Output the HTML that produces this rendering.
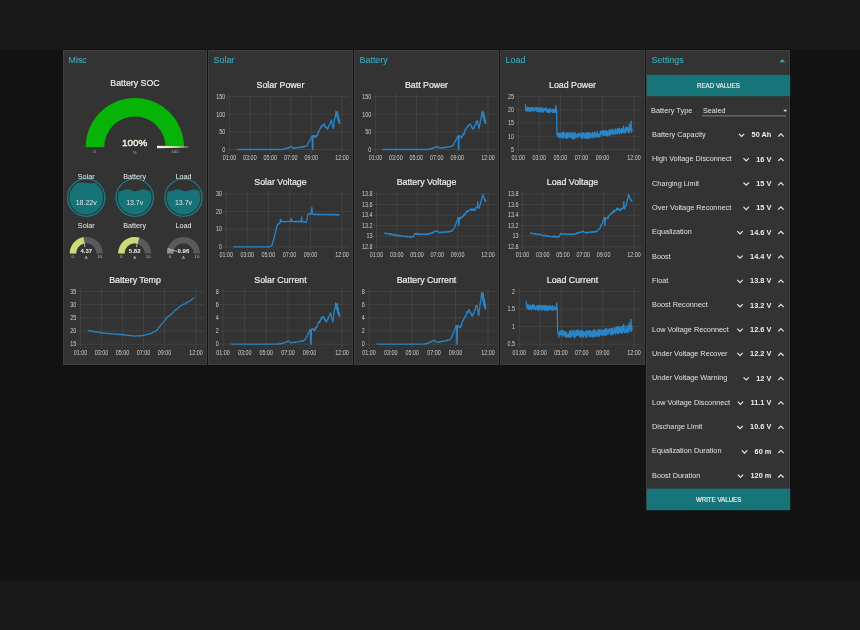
<!DOCTYPE html>
<html><head><meta charset="utf-8"><style>
html,body{margin:0;padding:0;background:#121212;width:860px;height:630px;overflow:hidden}
svg{display:block;font-family:"Liberation Sans", sans-serif;will-change:transform}

</style></head><body><div id="wrap">
<svg width="860" height="630" viewBox="0 0 860 630">
<rect x="0" y="0" width="860" height="630" fill="#121212"/>
<rect x="0" y="0" width="860" height="49" fill="#191919"/>
<rect x="0" y="581" width="860" height="49" fill="#191919"/>
<rect x="63.5" y="50.5" width="143" height="314" fill="#333333" stroke="#3e3e3e" stroke-width="1"/>
<rect x="208.5" y="50.5" width="144" height="314" fill="#333333" stroke="#3e3e3e" stroke-width="1"/>
<rect x="354.5" y="50.5" width="144" height="314" fill="#333333" stroke="#3e3e3e" stroke-width="1"/>
<rect x="500.5" y="50.5" width="144" height="314" fill="#333333" stroke="#3e3e3e" stroke-width="1"/>
<rect x="646.5" y="50.5" width="143" height="459" fill="#333333" stroke="#3e3e3e" stroke-width="1"/>
<text transform="translate(68.50,63.30) scale(0.92,1)" x="0" y="0" font-size="9.7" fill="#38abbb" text-anchor="start" font-weight="normal" stroke="#38abbb" stroke-width="0.12">Misc</text>
<text transform="translate(213.50,63.30) scale(0.92,1)" x="0" y="0" font-size="9.7" fill="#38abbb" text-anchor="start" font-weight="normal" stroke="#38abbb" stroke-width="0.12">Solar</text>
<text transform="translate(359.50,63.30) scale(0.92,1)" x="0" y="0" font-size="9.7" fill="#38abbb" text-anchor="start" font-weight="normal" stroke="#38abbb" stroke-width="0.12">Battery</text>
<text transform="translate(505.50,63.30) scale(0.92,1)" x="0" y="0" font-size="9.7" fill="#38abbb" text-anchor="start" font-weight="normal" stroke="#38abbb" stroke-width="0.12">Load</text>
<text transform="translate(651.50,63.30) scale(0.92,1)" x="0" y="0" font-size="9.7" fill="#38abbb" text-anchor="start" font-weight="normal" stroke="#38abbb" stroke-width="0.12">Settings</text>
<text x="280.50" y="88.00" font-size="8.8" fill="#ececec" text-anchor="middle" font-weight="normal" stroke="#ececec" stroke-width="0.2">Solar Power</text>
<line x1="225.90" y1="96.70" x2="350.00" y2="96.70" stroke="#474747" stroke-width="0.7"/>
<text transform="translate(225.20,98.90) scale(0.86,1)" x="0" y="0" font-size="6.3" fill="#cfcfcf" text-anchor="end" font-weight="normal" >150</text>
<line x1="225.90" y1="114.30" x2="350.00" y2="114.30" stroke="#474747" stroke-width="0.7"/>
<text transform="translate(225.20,116.50) scale(0.86,1)" x="0" y="0" font-size="6.3" fill="#cfcfcf" text-anchor="end" font-weight="normal" >100</text>
<line x1="225.90" y1="131.90" x2="350.00" y2="131.90" stroke="#474747" stroke-width="0.7"/>
<text transform="translate(225.20,134.10) scale(0.86,1)" x="0" y="0" font-size="6.3" fill="#cfcfcf" text-anchor="end" font-weight="normal" >50</text>
<line x1="225.90" y1="149.50" x2="350.00" y2="149.50" stroke="#474747" stroke-width="0.7"/>
<text transform="translate(225.20,151.70) scale(0.86,1)" x="0" y="0" font-size="6.3" fill="#cfcfcf" text-anchor="end" font-weight="normal" >0</text>
<line x1="229.40" y1="93.70" x2="229.40" y2="154.10" stroke="#474747" stroke-width="0.7"/>
<text transform="translate(229.40,160.10) scale(0.86,1)" x="0" y="0" font-size="6.3" fill="#cfcfcf" text-anchor="middle" font-weight="normal" >01:00</text>
<line x1="249.87" y1="93.70" x2="249.87" y2="154.10" stroke="#474747" stroke-width="0.7"/>
<text transform="translate(249.87,160.10) scale(0.86,1)" x="0" y="0" font-size="6.3" fill="#cfcfcf" text-anchor="middle" font-weight="normal" >03:00</text>
<line x1="270.35" y1="93.70" x2="270.35" y2="154.10" stroke="#474747" stroke-width="0.7"/>
<text transform="translate(270.35,160.10) scale(0.86,1)" x="0" y="0" font-size="6.3" fill="#cfcfcf" text-anchor="middle" font-weight="normal" >05:00</text>
<line x1="290.82" y1="93.70" x2="290.82" y2="154.10" stroke="#474747" stroke-width="0.7"/>
<text transform="translate(290.82,160.10) scale(0.86,1)" x="0" y="0" font-size="6.3" fill="#cfcfcf" text-anchor="middle" font-weight="normal" >07:00</text>
<line x1="311.29" y1="93.70" x2="311.29" y2="154.10" stroke="#474747" stroke-width="0.7"/>
<text transform="translate(311.29,160.10) scale(0.86,1)" x="0" y="0" font-size="6.3" fill="#cfcfcf" text-anchor="middle" font-weight="normal" >09:00</text>
<line x1="342.00" y1="93.70" x2="342.00" y2="154.10" stroke="#474747" stroke-width="0.7"/>
<text transform="translate(342.00,160.10) scale(0.86,1)" x="0" y="0" font-size="6.3" fill="#cfcfcf" text-anchor="middle" font-weight="normal" >12:00</text>
<polyline points="236.72,149.50 237.07,149.50 237.43,149.50 237.79,149.50 238.15,149.50 238.51,149.50 238.87,149.50 239.22,149.50 239.58,149.50 239.94,149.50 240.30,149.50 240.66,149.50 241.02,149.50 241.38,149.50 241.73,149.50 242.09,149.50 242.45,149.50 242.81,149.50 243.17,149.50 243.53,149.50 243.88,149.50 244.24,149.50 244.60,149.50 244.96,149.50 245.32,149.50 245.68,149.50 246.03,149.50 246.39,149.50 246.75,149.50 247.11,149.50 247.47,149.50 247.83,149.50 248.19,149.50 248.54,149.50 248.90,149.50 249.26,149.50 249.62,149.50 249.98,149.50 250.34,149.50 250.69,149.50 251.05,149.50 251.41,149.50 251.77,149.50 252.13,149.50 252.49,149.50 252.84,149.50 253.20,149.50 253.56,149.50 253.92,149.50 254.28,149.50 254.64,149.50 255.00,149.50 255.35,149.50 255.71,149.50 256.07,149.50 256.43,149.50 256.79,149.50 257.15,149.50 257.50,149.50 257.86,149.50 258.22,149.50 258.58,149.50 258.94,149.50 259.30,149.50 259.65,149.50 260.01,149.50 260.37,149.50 260.73,149.50 261.09,149.50 261.45,149.50 261.81,149.50 262.16,149.50 262.52,149.50 262.88,149.50 263.24,149.50 263.60,149.50 263.96,149.50 264.31,149.50 264.67,149.50 265.03,149.50 265.39,149.50 265.75,149.50 266.11,149.50 266.46,149.50 266.82,149.50 267.18,149.50 267.54,149.50 267.90,149.50 268.26,149.50 268.62,149.50 268.97,149.50 269.33,149.50 269.69,149.50 270.05,149.50 270.41,149.50 270.77,149.50 271.12,149.50 271.48,149.50 271.84,149.50 272.20,149.50 272.56,149.50 272.92,149.50 273.27,149.50 273.63,149.50 273.99,149.50 274.35,149.50 274.71,149.50 275.07,149.50 275.43,149.50 275.78,149.50 276.14,149.50 276.50,149.50 276.86,149.50 277.22,149.50 277.58,149.50 277.93,149.50 278.29,149.50 278.65,149.50 279.01,149.50 279.37,149.50 279.73,149.50 280.08,149.50 280.44,149.50 280.80,149.50 281.16,149.50 281.52,149.50 281.88,149.50 282.24,149.50 282.60,149.62 282.97,149.19 283.34,149.13 283.71,149.13 284.08,149.20 284.45,148.74 284.82,148.63 285.19,148.72 285.56,148.63 285.93,148.71 286.30,148.44 286.67,148.62 287.05,148.24 287.42,147.96 287.80,148.15 288.18,147.55 288.55,147.76 288.93,147.62 289.30,147.60 289.68,146.85 290.05,146.87 290.43,146.64 290.80,146.66 291.18,146.60 291.54,147.12 291.90,147.16 292.27,147.28 292.63,147.74 292.99,147.44 293.35,148.04 293.72,148.18 294.09,148.35 294.46,147.87 294.83,148.26 295.20,147.70 295.57,147.95 295.94,147.83 296.31,147.91 296.68,147.77 297.05,147.90 297.42,147.95 297.79,147.37 298.16,147.71 298.53,147.32 298.90,147.63 299.28,147.09 299.65,147.09 300.02,147.28 300.40,147.06 300.77,146.99 301.15,147.04 301.53,146.88 301.91,147.20 302.29,146.92 302.67,146.63 303.05,146.96 303.43,146.44 303.81,146.40 304.19,146.64 304.57,146.61 304.95,146.49 305.33,146.47 305.71,146.33 306.09,145.75 306.47,145.88 306.85,145.84 307.23,145.28 307.61,144.77 308.00,143.61 308.38,142.68 308.77,142.23 309.15,141.47 309.53,140.67 309.92,139.78 310.30,139.35 310.68,138.41 311.06,137.55 311.43,136.79 311.80,136.04 312.31,136.04 312.51,149.50 312.82,149.50 313.02,135.67 313.53,135.59 314.04,135.67 314.42,136.81 314.81,137.13 315.20,136.95 315.58,135.72 315.97,137.14 316.33,136.83 316.70,135.46 317.07,135.51 317.43,135.33 317.80,134.72 318.16,132.03 318.53,131.41 318.89,131.75 319.26,130.22 319.63,129.53 319.99,129.28 320.36,127.75 320.74,127.11 321.11,128.08 321.48,126.07 321.85,125.66 322.23,126.16 322.60,124.91 322.97,125.46 323.34,125.29 323.71,125.14 324.09,124.00 324.44,123.76 324.80,126.39 325.16,127.39 325.52,127.01 325.89,126.58 326.26,127.04 326.62,128.19 326.99,127.64 327.36,128.91 327.73,129.25 328.10,127.86 328.47,126.93 328.84,125.74 329.20,124.68 329.58,124.89 329.96,124.50 330.33,123.13 330.71,120.99 331.08,120.11 331.46,120.72 331.87,122.05 332.28,124.68 332.79,126.64 333.30,128.49 333.71,126.15 334.12,121.29 334.53,119.51 334.94,118.07 335.35,116.76 335.70,113.39 336.06,111.22 336.47,114.65 336.78,113.07 337.19,117.82 337.60,112.01 338.01,120.99 338.52,116.02 339.03,123.10 339.44,119.93 339.85,124.00" fill="none" stroke="#2a84c6" stroke-width="1.3" stroke-linejoin="round"/>
<text x="280.50" y="185.40" font-size="8.8" fill="#ececec" text-anchor="middle" font-weight="normal" stroke="#ececec" stroke-width="0.2">Solar Voltage</text>
<line x1="222.80" y1="194.00" x2="350.00" y2="194.00" stroke="#474747" stroke-width="0.7"/>
<text transform="translate(222.10,196.20) scale(0.86,1)" x="0" y="0" font-size="6.3" fill="#cfcfcf" text-anchor="end" font-weight="normal" >30</text>
<line x1="222.80" y1="211.60" x2="350.00" y2="211.60" stroke="#474747" stroke-width="0.7"/>
<text transform="translate(222.10,213.80) scale(0.86,1)" x="0" y="0" font-size="6.3" fill="#cfcfcf" text-anchor="end" font-weight="normal" >20</text>
<line x1="222.80" y1="229.20" x2="350.00" y2="229.20" stroke="#474747" stroke-width="0.7"/>
<text transform="translate(222.10,231.40) scale(0.86,1)" x="0" y="0" font-size="6.3" fill="#cfcfcf" text-anchor="end" font-weight="normal" >10</text>
<line x1="222.80" y1="246.80" x2="350.00" y2="246.80" stroke="#474747" stroke-width="0.7"/>
<text transform="translate(222.10,249.00) scale(0.86,1)" x="0" y="0" font-size="6.3" fill="#cfcfcf" text-anchor="end" font-weight="normal" >0</text>
<line x1="226.30" y1="191.00" x2="226.30" y2="251.40" stroke="#474747" stroke-width="0.7"/>
<text transform="translate(226.30,257.40) scale(0.86,1)" x="0" y="0" font-size="6.3" fill="#cfcfcf" text-anchor="middle" font-weight="normal" >01:00</text>
<line x1="247.34" y1="191.00" x2="247.34" y2="251.40" stroke="#474747" stroke-width="0.7"/>
<text transform="translate(247.34,257.40) scale(0.86,1)" x="0" y="0" font-size="6.3" fill="#cfcfcf" text-anchor="middle" font-weight="normal" >03:00</text>
<line x1="268.37" y1="191.00" x2="268.37" y2="251.40" stroke="#474747" stroke-width="0.7"/>
<text transform="translate(268.37,257.40) scale(0.86,1)" x="0" y="0" font-size="6.3" fill="#cfcfcf" text-anchor="middle" font-weight="normal" >05:00</text>
<line x1="289.41" y1="191.00" x2="289.41" y2="251.40" stroke="#474747" stroke-width="0.7"/>
<text transform="translate(289.41,257.40) scale(0.86,1)" x="0" y="0" font-size="6.3" fill="#cfcfcf" text-anchor="middle" font-weight="normal" >07:00</text>
<line x1="310.45" y1="191.00" x2="310.45" y2="251.40" stroke="#474747" stroke-width="0.7"/>
<text transform="translate(310.45,257.40) scale(0.86,1)" x="0" y="0" font-size="6.3" fill="#cfcfcf" text-anchor="middle" font-weight="normal" >09:00</text>
<line x1="342.00" y1="191.00" x2="342.00" y2="251.40" stroke="#474747" stroke-width="0.7"/>
<text transform="translate(342.00,257.40) scale(0.86,1)" x="0" y="0" font-size="6.3" fill="#cfcfcf" text-anchor="middle" font-weight="normal" >12:00</text>
<polyline points="233.68,246.80 234.10,246.80 234.53,246.80 234.95,246.80 235.37,246.80 235.79,246.80 236.21,246.80 236.64,246.80 237.06,246.80 237.48,246.80 237.90,246.80 238.32,246.80 238.75,246.80 239.17,246.80 239.59,246.80 240.01,246.80 240.43,246.80 240.86,246.80 241.28,246.80 241.70,246.80 242.12,246.80 242.54,246.80 242.97,246.80 243.39,246.80 243.81,246.80 244.23,246.80 244.65,246.80 245.08,246.80 245.50,246.80 245.92,246.80 246.34,246.80 246.76,246.80 247.19,246.80 247.61,246.80 248.03,246.80 248.45,246.80 248.87,246.80 249.30,246.80 249.72,246.80 250.14,246.80 250.56,246.80 250.98,246.80 251.41,246.80 251.83,246.80 252.25,246.80 252.67,246.80 253.09,246.80 253.52,246.80 253.94,246.80 254.36,246.80 254.78,246.80 255.20,246.80 255.63,246.80 256.05,246.80 256.47,246.80 256.89,246.80 257.31,246.80 257.74,246.80 258.16,246.80 258.58,246.80 259.00,246.80 259.42,246.80 259.85,246.80 260.27,246.80 260.69,246.80 261.11,246.80 261.53,246.80 261.96,246.80 262.38,246.80 262.80,246.80 263.22,246.80 263.64,246.80 264.07,246.80 264.49,246.80 264.91,246.80 265.33,246.80 265.75,246.80 266.17,246.80 266.60,246.80 267.02,246.80 267.44,246.80 267.86,246.80 268.28,246.80 268.71,246.80 269.13,246.80 269.55,246.80 269.97,246.80 270.41,246.46 270.85,245.99 271.28,245.30 271.72,245.31 272.16,244.90 272.64,243.12 273.13,241.29 273.61,239.86 274.10,237.81 274.58,235.95 275.07,234.29 275.50,232.15 275.94,230.85 276.38,228.78 276.81,227.07 277.25,224.84 277.71,224.29 278.17,224.10 278.62,224.37 279.08,223.29 279.54,223.41 280.16,222.51 280.48,219.08 280.99,221.98 281.51,221.56 281.96,221.16 282.40,221.42 282.84,221.45 283.28,221.83 283.72,221.95 284.16,221.51 284.60,221.90 285.04,221.78 285.48,221.73 285.92,221.91 286.36,221.54 286.80,221.55 287.24,221.21 287.68,221.48 288.13,221.37 288.57,221.48 289.01,221.34 289.45,221.51 289.89,221.65 290.33,221.04 290.77,221.46 291.29,218.29 291.81,221.46 292.23,221.05 292.66,221.19 293.09,221.32 293.51,221.66 293.94,221.74 294.36,221.71 294.79,221.90 295.21,221.33 295.64,221.65 296.06,221.28 296.49,221.68 296.91,221.21 297.34,221.32 297.76,222.05 298.19,221.88 298.62,221.30 299.04,221.69 299.47,221.27 299.89,221.77 300.32,222.06 300.74,221.60 301.17,221.72 301.58,216.86 302.00,221.72 302.44,221.53 302.87,222.00 303.31,222.20 303.75,222.03 304.18,221.54 304.62,221.76 305.06,222.34 305.49,222.27 305.93,222.44 306.37,222.14 306.85,219.82 307.34,216.51 307.82,214.06 308.29,214.27 308.76,213.88 309.23,213.91 309.69,214.06 310.16,213.54 310.63,213.98 311.10,213.48 311.57,213.54 311.88,207.52 312.40,213.54 313.02,214.38 313.45,214.71 313.88,214.46 314.31,214.65 314.74,214.61 315.18,214.02 315.61,214.17 316.04,214.60 316.47,214.12 316.90,214.69 317.33,214.55 317.76,214.16 318.19,214.35 318.62,214.82 319.05,214.07 319.48,214.74 319.91,214.71 320.34,214.28 320.78,214.66 321.21,214.70 321.64,214.89 322.07,214.89 322.50,214.48 322.93,214.77 323.36,214.48 323.79,214.68 324.22,214.62 324.65,214.20 325.08,214.59 325.51,214.61 325.95,214.54 326.38,214.30 326.81,214.88 327.24,214.92 327.67,214.28 328.10,214.37 328.53,214.85 328.96,214.91 329.40,214.45 329.83,214.29 330.26,214.92 330.69,214.29 331.12,214.36 331.55,214.60 331.98,214.76 332.41,215.03 332.85,215.09 333.28,214.32 333.71,214.94 334.14,214.55 334.57,214.93 335.00,214.46 335.43,214.66 335.86,214.92 336.30,215.03 336.73,214.57 337.16,215.13 337.59,215.00 338.02,214.73 338.45,214.49 338.88,214.69 339.31,214.98 339.75,214.80" fill="none" stroke="#2a84c6" stroke-width="1.3" stroke-linejoin="round"/>
<text x="280.50" y="283.00" font-size="8.8" fill="#ececec" text-anchor="middle" font-weight="normal" stroke="#ececec" stroke-width="0.2">Solar Current</text>
<line x1="219.50" y1="291.40" x2="350.00" y2="291.40" stroke="#474747" stroke-width="0.7"/>
<text transform="translate(218.80,293.60) scale(0.86,1)" x="0" y="0" font-size="6.3" fill="#cfcfcf" text-anchor="end" font-weight="normal" >8</text>
<line x1="219.50" y1="304.60" x2="350.00" y2="304.60" stroke="#474747" stroke-width="0.7"/>
<text transform="translate(218.80,306.80) scale(0.86,1)" x="0" y="0" font-size="6.3" fill="#cfcfcf" text-anchor="end" font-weight="normal" >6</text>
<line x1="219.50" y1="317.80" x2="350.00" y2="317.80" stroke="#474747" stroke-width="0.7"/>
<text transform="translate(218.80,320.00) scale(0.86,1)" x="0" y="0" font-size="6.3" fill="#cfcfcf" text-anchor="end" font-weight="normal" >4</text>
<line x1="219.50" y1="331.00" x2="350.00" y2="331.00" stroke="#474747" stroke-width="0.7"/>
<text transform="translate(218.80,333.20) scale(0.86,1)" x="0" y="0" font-size="6.3" fill="#cfcfcf" text-anchor="end" font-weight="normal" >2</text>
<line x1="219.50" y1="344.20" x2="350.00" y2="344.20" stroke="#474747" stroke-width="0.7"/>
<text transform="translate(218.80,346.40) scale(0.86,1)" x="0" y="0" font-size="6.3" fill="#cfcfcf" text-anchor="end" font-weight="normal" >0</text>
<line x1="223.00" y1="288.40" x2="223.00" y2="348.80" stroke="#474747" stroke-width="0.7"/>
<text transform="translate(223.00,354.80) scale(0.86,1)" x="0" y="0" font-size="6.3" fill="#cfcfcf" text-anchor="middle" font-weight="normal" >01:00</text>
<line x1="244.64" y1="288.40" x2="244.64" y2="348.80" stroke="#474747" stroke-width="0.7"/>
<text transform="translate(244.64,354.80) scale(0.86,1)" x="0" y="0" font-size="6.3" fill="#cfcfcf" text-anchor="middle" font-weight="normal" >03:00</text>
<line x1="266.27" y1="288.40" x2="266.27" y2="348.80" stroke="#474747" stroke-width="0.7"/>
<text transform="translate(266.27,354.80) scale(0.86,1)" x="0" y="0" font-size="6.3" fill="#cfcfcf" text-anchor="middle" font-weight="normal" >05:00</text>
<line x1="287.91" y1="288.40" x2="287.91" y2="348.80" stroke="#474747" stroke-width="0.7"/>
<text transform="translate(287.91,354.80) scale(0.86,1)" x="0" y="0" font-size="6.3" fill="#cfcfcf" text-anchor="middle" font-weight="normal" >07:00</text>
<line x1="309.55" y1="288.40" x2="309.55" y2="348.80" stroke="#474747" stroke-width="0.7"/>
<text transform="translate(309.55,354.80) scale(0.86,1)" x="0" y="0" font-size="6.3" fill="#cfcfcf" text-anchor="middle" font-weight="normal" >09:00</text>
<line x1="342.00" y1="288.40" x2="342.00" y2="348.80" stroke="#474747" stroke-width="0.7"/>
<text transform="translate(342.00,354.80) scale(0.86,1)" x="0" y="0" font-size="6.3" fill="#cfcfcf" text-anchor="middle" font-weight="normal" >12:00</text>
<polyline points="230.73,344.20 231.11,344.20 231.49,344.20 231.87,344.20 232.25,344.20 232.63,344.20 233.00,344.20 233.38,344.20 233.76,344.20 234.14,344.20 234.52,344.20 234.90,344.20 235.28,344.20 235.66,344.20 236.03,344.20 236.41,344.20 236.79,344.20 237.17,344.20 237.55,344.20 237.93,344.20 238.31,344.20 238.69,344.20 239.06,344.20 239.44,344.20 239.82,344.20 240.20,344.20 240.58,344.20 240.96,344.20 241.34,344.20 241.72,344.20 242.10,344.20 242.47,344.20 242.85,344.20 243.23,344.20 243.61,344.20 243.99,344.20 244.37,344.20 244.75,344.20 245.13,344.20 245.50,344.20 245.88,344.20 246.26,344.20 246.64,344.20 247.02,344.20 247.40,344.20 247.78,344.20 248.16,344.20 248.53,344.20 248.91,344.20 249.29,344.20 249.67,344.20 250.05,344.20 250.43,344.20 250.81,344.20 251.19,344.20 251.57,344.20 251.94,344.20 252.32,344.20 252.70,344.20 253.08,344.20 253.46,344.20 253.84,344.20 254.22,344.20 254.60,344.20 254.97,344.20 255.35,344.20 255.73,344.20 256.11,344.20 256.49,344.20 256.87,344.20 257.25,344.20 257.63,344.20 258.00,344.20 258.38,344.20 258.76,344.20 259.14,344.20 259.52,344.20 259.90,344.20 260.28,344.20 260.66,344.20 261.03,344.20 261.41,344.20 261.79,344.20 262.17,344.20 262.55,344.20 262.93,344.20 263.31,344.20 263.69,344.20 264.07,344.20 264.44,344.20 264.82,344.20 265.20,344.20 265.58,344.20 265.96,344.20 266.34,344.20 266.72,344.20 267.10,344.20 267.47,344.20 267.85,344.20 268.23,344.20 268.61,344.20 268.99,344.20 269.37,344.20 269.75,344.20 270.13,344.20 270.50,344.20 270.88,344.20 271.26,344.20 271.64,344.20 272.02,344.20 272.40,344.20 272.78,344.20 273.16,344.20 273.54,344.20 273.91,344.20 274.29,344.20 274.67,344.20 275.05,344.20 275.43,344.20 275.81,344.20 276.19,344.20 276.57,344.20 276.94,344.20 277.32,344.20 277.70,344.20 278.08,344.20 278.46,344.20 278.84,344.20 279.23,343.83 279.62,343.71 280.01,343.64 280.40,344.05 280.79,343.62 281.18,343.63 281.57,343.46 281.96,343.60 282.35,343.46 282.74,343.20 283.13,343.06 283.53,343.08 283.93,342.78 284.32,342.90 284.72,342.71 285.12,342.16 285.51,342.19 285.91,341.98 286.31,341.68 286.70,341.77 287.10,341.80 287.49,341.19 287.89,341.16 288.29,341.06 288.67,341.21 289.05,341.48 289.44,341.50 289.82,342.13 290.21,342.12 290.59,342.61 290.97,342.77 291.36,342.67 291.76,342.56 292.15,342.72 292.54,342.81 292.93,342.51 293.32,342.29 293.71,342.32 294.11,342.35 294.50,342.17 294.89,342.41 295.28,342.35 295.67,342.20 296.06,341.83 296.46,342.17 296.85,342.16 297.24,342.12 297.63,341.80 298.03,342.03 298.43,341.81 298.83,341.55 299.23,341.33 299.63,341.57 300.04,341.48 300.44,341.46 300.84,341.38 301.24,341.01 301.64,341.09 302.04,341.21 302.44,341.23 302.84,340.74 303.24,340.72 303.64,340.78 304.05,340.29 304.45,340.37 304.85,339.89 305.25,339.64 305.66,338.55 306.07,337.93 306.47,336.88 306.88,336.55 307.28,335.22 307.69,334.98 308.09,333.93 308.50,333.35 308.91,332.22 309.30,331.17 309.69,330.40 310.09,329.66 310.62,329.66 310.84,344.20 311.16,344.20 311.37,329.26 311.91,328.96 312.45,329.26 312.86,328.77 313.26,328.71 313.67,330.12 314.08,329.25 314.49,330.86 314.88,329.43 315.26,329.72 315.65,327.29 316.04,328.09 316.42,327.80 316.81,327.34 317.19,325.54 317.58,325.48 317.97,322.76 318.35,321.94 318.74,322.36 319.13,322.59 319.53,322.37 319.92,320.73 320.31,321.16 320.71,319.65 321.10,318.42 321.49,319.38 321.89,318.42 322.28,316.64 322.67,317.32 323.07,316.66 323.45,317.89 323.83,317.25 324.20,318.27 324.58,319.91 324.97,319.28 325.36,320.23 325.75,321.37 326.14,321.04 326.53,321.96 326.92,320.18 327.31,319.77 327.70,319.91 328.09,318.85 328.48,317.40 328.87,316.92 329.27,315.26 329.67,315.11 330.06,314.42 330.46,312.97 330.86,313.12 331.29,316.29 331.72,317.40 332.26,319.11 332.80,321.50 333.24,318.72 333.67,314.89 334.10,311.81 334.54,309.44 334.97,308.85 335.35,306.52 335.73,302.86 336.16,306.56 336.48,304.85 336.92,309.99 337.35,303.71 337.78,313.41 338.32,308.05 338.86,315.69 339.30,312.27 339.73,316.66" fill="none" stroke="#2a84c6" stroke-width="1.3" stroke-linejoin="round"/>
<text x="426.50" y="88.00" font-size="8.8" fill="#ececec" text-anchor="middle" font-weight="normal" stroke="#ececec" stroke-width="0.2">Batt Power</text>
<line x1="371.90" y1="96.70" x2="496.00" y2="96.70" stroke="#474747" stroke-width="0.7"/>
<text transform="translate(371.20,98.90) scale(0.86,1)" x="0" y="0" font-size="6.3" fill="#cfcfcf" text-anchor="end" font-weight="normal" >150</text>
<line x1="371.90" y1="114.30" x2="496.00" y2="114.30" stroke="#474747" stroke-width="0.7"/>
<text transform="translate(371.20,116.50) scale(0.86,1)" x="0" y="0" font-size="6.3" fill="#cfcfcf" text-anchor="end" font-weight="normal" >100</text>
<line x1="371.90" y1="131.90" x2="496.00" y2="131.90" stroke="#474747" stroke-width="0.7"/>
<text transform="translate(371.20,134.10) scale(0.86,1)" x="0" y="0" font-size="6.3" fill="#cfcfcf" text-anchor="end" font-weight="normal" >50</text>
<line x1="371.90" y1="149.50" x2="496.00" y2="149.50" stroke="#474747" stroke-width="0.7"/>
<text transform="translate(371.20,151.70) scale(0.86,1)" x="0" y="0" font-size="6.3" fill="#cfcfcf" text-anchor="end" font-weight="normal" >0</text>
<line x1="375.40" y1="93.70" x2="375.40" y2="154.10" stroke="#474747" stroke-width="0.7"/>
<text transform="translate(375.40,160.10) scale(0.86,1)" x="0" y="0" font-size="6.3" fill="#cfcfcf" text-anchor="middle" font-weight="normal" >01:00</text>
<line x1="395.87" y1="93.70" x2="395.87" y2="154.10" stroke="#474747" stroke-width="0.7"/>
<text transform="translate(395.87,160.10) scale(0.86,1)" x="0" y="0" font-size="6.3" fill="#cfcfcf" text-anchor="middle" font-weight="normal" >03:00</text>
<line x1="416.35" y1="93.70" x2="416.35" y2="154.10" stroke="#474747" stroke-width="0.7"/>
<text transform="translate(416.35,160.10) scale(0.86,1)" x="0" y="0" font-size="6.3" fill="#cfcfcf" text-anchor="middle" font-weight="normal" >05:00</text>
<line x1="436.82" y1="93.70" x2="436.82" y2="154.10" stroke="#474747" stroke-width="0.7"/>
<text transform="translate(436.82,160.10) scale(0.86,1)" x="0" y="0" font-size="6.3" fill="#cfcfcf" text-anchor="middle" font-weight="normal" >07:00</text>
<line x1="457.29" y1="93.70" x2="457.29" y2="154.10" stroke="#474747" stroke-width="0.7"/>
<text transform="translate(457.29,160.10) scale(0.86,1)" x="0" y="0" font-size="6.3" fill="#cfcfcf" text-anchor="middle" font-weight="normal" >09:00</text>
<line x1="488.00" y1="93.70" x2="488.00" y2="154.10" stroke="#474747" stroke-width="0.7"/>
<text transform="translate(488.00,160.10) scale(0.86,1)" x="0" y="0" font-size="6.3" fill="#cfcfcf" text-anchor="middle" font-weight="normal" >12:00</text>
<polyline points="382.72,149.50 383.07,149.50 383.43,149.50 383.79,149.50 384.15,149.50 384.51,149.50 384.87,149.50 385.22,149.50 385.58,149.50 385.94,149.50 386.30,149.50 386.66,149.50 387.02,149.50 387.38,149.50 387.73,149.50 388.09,149.50 388.45,149.50 388.81,149.50 389.17,149.50 389.53,149.50 389.88,149.50 390.24,149.50 390.60,149.50 390.96,149.50 391.32,149.50 391.68,149.50 392.03,149.50 392.39,149.50 392.75,149.50 393.11,149.50 393.47,149.50 393.83,149.50 394.19,149.50 394.54,149.50 394.90,149.50 395.26,149.50 395.62,149.50 395.98,149.50 396.34,149.50 396.69,149.50 397.05,149.50 397.41,149.50 397.77,149.50 398.13,149.50 398.49,149.50 398.84,149.50 399.20,149.50 399.56,149.50 399.92,149.50 400.28,149.50 400.64,149.50 401.00,149.50 401.35,149.50 401.71,149.50 402.07,149.50 402.43,149.50 402.79,149.50 403.15,149.50 403.50,149.50 403.86,149.50 404.22,149.50 404.58,149.50 404.94,149.50 405.30,149.50 405.65,149.50 406.01,149.50 406.37,149.50 406.73,149.50 407.09,149.50 407.45,149.50 407.81,149.50 408.16,149.50 408.52,149.50 408.88,149.50 409.24,149.50 409.60,149.50 409.96,149.50 410.31,149.50 410.67,149.50 411.03,149.50 411.39,149.50 411.75,149.50 412.11,149.50 412.46,149.50 412.82,149.50 413.18,149.50 413.54,149.50 413.90,149.50 414.26,149.50 414.62,149.50 414.97,149.50 415.33,149.50 415.69,149.50 416.05,149.50 416.41,149.50 416.77,149.50 417.12,149.50 417.48,149.50 417.84,149.50 418.20,149.50 418.56,149.50 418.92,149.50 419.27,149.50 419.63,149.50 419.99,149.50 420.35,149.50 420.71,149.50 421.07,149.50 421.43,149.50 421.78,149.50 422.14,149.50 422.50,149.50 422.86,149.50 423.22,149.50 423.58,149.50 423.93,149.50 424.29,149.50 424.65,149.50 425.01,149.50 425.37,149.50 425.73,149.50 426.08,149.50 426.44,149.50 426.80,149.50 427.16,149.50 427.52,149.50 427.88,149.50 428.24,149.50 428.60,149.11 428.97,149.54 429.34,149.51 429.71,148.80 430.08,149.22 430.45,149.16 430.82,148.73 431.19,148.83 431.56,148.39 431.93,148.71 432.30,148.44 432.67,148.01 433.05,148.27 433.42,147.95 433.80,147.60 434.18,147.62 434.55,147.32 434.93,147.32 435.30,147.59 435.68,146.92 436.05,146.97 436.43,147.00 436.80,146.93 437.18,146.60 437.54,146.60 437.90,147.00 438.27,147.00 438.63,147.33 438.99,147.44 439.35,147.91 439.72,148.18 440.09,148.00 440.46,148.00 440.83,148.17 441.20,147.68 441.57,148.03 441.94,147.69 442.31,147.52 442.68,147.66 443.05,147.93 443.42,147.45 443.79,147.49 444.16,147.75 444.53,147.78 444.90,147.42 445.28,147.68 445.65,147.07 446.02,147.28 446.40,147.22 446.77,147.14 447.15,147.15 447.53,146.93 447.91,146.70 448.29,147.02 448.67,146.92 449.05,146.72 449.43,146.84 449.81,146.59 450.19,146.56 450.57,146.56 450.95,146.35 451.33,146.38 451.71,146.33 452.09,146.33 452.47,145.49 452.85,145.63 453.23,145.28 453.61,144.56 454.00,143.81 454.38,142.72 454.77,141.94 455.15,141.46 455.53,140.76 455.92,140.19 456.30,138.92 456.68,138.41 457.06,137.83 457.43,136.80 457.80,136.04 458.31,136.04 458.51,149.50 458.82,149.50 459.02,135.67 459.53,135.76 460.04,135.67 460.42,136.42 460.81,136.63 461.20,137.37 461.58,138.07 461.97,137.14 462.33,136.34 462.70,134.93 463.07,134.61 463.43,135.07 463.80,133.06 464.16,134.04 464.53,132.37 464.89,130.56 465.26,129.60 465.63,130.10 465.99,129.28 466.36,127.88 466.74,128.32 467.11,127.77 467.48,127.13 467.85,125.58 468.23,125.75 468.60,125.99 468.97,124.84 469.34,124.58 469.71,124.86 470.09,124.00 470.44,124.00 470.80,124.66 471.16,125.97 471.52,127.01 471.89,126.22 472.26,129.04 472.62,128.15 472.99,128.17 473.36,128.91 473.73,128.48 474.10,128.09 474.47,125.87 474.84,125.70 475.20,124.68 475.58,124.63 475.96,124.57 476.33,121.47 476.71,122.43 477.08,122.39 477.46,120.72 477.87,123.45 478.28,124.68 478.79,127.23 479.30,128.49 479.71,124.53 480.12,123.34 480.53,119.51 480.94,118.73 481.35,116.76 481.70,115.05 482.06,111.22 482.47,114.65 482.78,113.07 483.19,117.82 483.60,112.01 484.01,120.99 484.52,116.02 485.03,123.10 485.44,119.93 485.85,124.00" fill="none" stroke="#2a84c6" stroke-width="1.3" stroke-linejoin="round"/>
<text x="426.50" y="185.40" font-size="8.8" fill="#ececec" text-anchor="middle" font-weight="normal" stroke="#ececec" stroke-width="0.2">Battery Voltage</text>
<line x1="373.10" y1="194.00" x2="496.00" y2="194.00" stroke="#474747" stroke-width="0.7"/>
<text transform="translate(372.40,196.20) scale(0.86,1)" x="0" y="0" font-size="6.3" fill="#cfcfcf" text-anchor="end" font-weight="normal" >13.8</text>
<line x1="373.10" y1="204.56" x2="496.00" y2="204.56" stroke="#474747" stroke-width="0.7"/>
<text transform="translate(372.40,206.76) scale(0.86,1)" x="0" y="0" font-size="6.3" fill="#cfcfcf" text-anchor="end" font-weight="normal" >13.6</text>
<line x1="373.10" y1="215.12" x2="496.00" y2="215.12" stroke="#474747" stroke-width="0.7"/>
<text transform="translate(372.40,217.32) scale(0.86,1)" x="0" y="0" font-size="6.3" fill="#cfcfcf" text-anchor="end" font-weight="normal" >13.4</text>
<line x1="373.10" y1="225.68" x2="496.00" y2="225.68" stroke="#474747" stroke-width="0.7"/>
<text transform="translate(372.40,227.88) scale(0.86,1)" x="0" y="0" font-size="6.3" fill="#cfcfcf" text-anchor="end" font-weight="normal" >13.2</text>
<line x1="373.10" y1="236.24" x2="496.00" y2="236.24" stroke="#474747" stroke-width="0.7"/>
<text transform="translate(372.40,238.44) scale(0.86,1)" x="0" y="0" font-size="6.3" fill="#cfcfcf" text-anchor="end" font-weight="normal" >13</text>
<line x1="373.10" y1="246.80" x2="496.00" y2="246.80" stroke="#474747" stroke-width="0.7"/>
<text transform="translate(372.40,249.00) scale(0.86,1)" x="0" y="0" font-size="6.3" fill="#cfcfcf" text-anchor="end" font-weight="normal" >12.8</text>
<line x1="376.60" y1="191.00" x2="376.60" y2="251.40" stroke="#474747" stroke-width="0.7"/>
<text transform="translate(376.60,257.40) scale(0.86,1)" x="0" y="0" font-size="6.3" fill="#cfcfcf" text-anchor="middle" font-weight="normal" >01:00</text>
<line x1="396.85" y1="191.00" x2="396.85" y2="251.40" stroke="#474747" stroke-width="0.7"/>
<text transform="translate(396.85,257.40) scale(0.86,1)" x="0" y="0" font-size="6.3" fill="#cfcfcf" text-anchor="middle" font-weight="normal" >03:00</text>
<line x1="417.11" y1="191.00" x2="417.11" y2="251.40" stroke="#474747" stroke-width="0.7"/>
<text transform="translate(417.11,257.40) scale(0.86,1)" x="0" y="0" font-size="6.3" fill="#cfcfcf" text-anchor="middle" font-weight="normal" >05:00</text>
<line x1="437.36" y1="191.00" x2="437.36" y2="251.40" stroke="#474747" stroke-width="0.7"/>
<text transform="translate(437.36,257.40) scale(0.86,1)" x="0" y="0" font-size="6.3" fill="#cfcfcf" text-anchor="middle" font-weight="normal" >07:00</text>
<line x1="457.62" y1="191.00" x2="457.62" y2="251.40" stroke="#474747" stroke-width="0.7"/>
<text transform="translate(457.62,257.40) scale(0.86,1)" x="0" y="0" font-size="6.3" fill="#cfcfcf" text-anchor="middle" font-weight="normal" >09:00</text>
<line x1="488.00" y1="191.00" x2="488.00" y2="251.40" stroke="#474747" stroke-width="0.7"/>
<text transform="translate(488.00,257.40) scale(0.86,1)" x="0" y="0" font-size="6.3" fill="#cfcfcf" text-anchor="middle" font-weight="normal" >12:00</text>
<polyline points="384.20,233.07 384.56,233.16 384.92,233.03 385.29,233.08 385.65,233.70 386.02,233.90 386.38,233.58 386.74,233.75 387.11,233.25 387.47,233.44 387.83,233.59 388.20,233.70 388.56,233.65 388.93,234.26 389.29,234.01 389.65,234.37 390.02,233.65 390.38,234.60 390.75,233.86 391.11,234.71 391.47,234.13 391.84,234.56 392.20,234.55 392.57,234.15 392.93,235.09 393.29,235.10 393.66,234.26 394.02,234.76 394.39,235.26 394.75,234.38 395.11,234.48 395.48,235.42 395.84,235.08 396.21,235.22 396.57,235.58 396.94,235.45 397.30,235.18 397.66,235.72 398.03,235.22 398.39,235.96 398.76,235.89 399.12,235.27 399.49,235.76 399.85,235.80 400.22,235.67 400.58,235.86 400.95,236.01 401.31,236.45 401.68,235.77 402.04,235.57 402.40,235.62 402.77,236.01 403.13,236.24 403.50,236.42 403.86,236.44 404.22,236.12 404.59,236.17 404.95,236.78 405.32,236.68 405.68,236.58 406.04,236.45 406.41,236.16 406.77,236.51 407.14,237.04 407.50,236.23 407.86,236.67 408.23,236.60 408.59,236.94 408.95,236.75 409.32,236.82 409.68,236.45 410.05,237.18 410.41,236.73 410.77,237.15 411.14,236.64 411.50,237.36 411.87,237.13 412.23,237.09 412.59,236.81 412.96,236.98 413.31,236.70 413.67,235.52 414.02,235.03 414.37,233.97 414.74,234.21 415.10,234.01 415.46,233.51 415.82,234.02 416.18,233.53 416.54,234.37 416.90,233.58 417.27,234.18 417.63,234.37 417.99,233.79 418.35,233.63 418.71,234.59 419.07,234.33 419.43,233.80 419.79,234.27 420.16,234.38 420.52,234.63 420.88,234.61 421.24,234.01 421.60,233.63 421.96,233.62 422.32,234.15 422.68,234.67 423.05,234.36 423.41,233.88 423.77,233.84 424.13,234.05 424.49,234.49 424.85,234.19 425.21,234.25 425.57,234.10 425.94,234.49 426.30,233.78 426.66,233.84 427.02,234.63 427.38,234.50 427.74,234.29 428.10,233.77 428.47,234.27 428.83,233.45 429.19,233.77 429.55,233.46 429.92,233.33 430.28,233.72 430.64,233.52 431.00,233.43 431.37,232.85 431.73,232.72 432.09,233.19 432.45,232.27 432.81,232.64 433.18,232.70 433.54,232.37 433.90,231.67 434.26,231.99 434.63,231.80 434.99,231.37 435.35,231.20 435.71,231.29 436.07,231.52 436.44,231.22 436.80,230.77 437.16,231.07 437.53,231.04 437.90,231.54 438.28,232.07 438.65,232.33 439.02,232.22 439.39,232.76 439.75,232.65 440.11,233.18 440.47,232.40 440.83,232.16 441.19,232.23 441.55,232.08 441.91,232.02 442.28,232.38 442.64,232.06 443.00,232.45 443.36,232.71 443.72,232.40 444.08,232.40 444.44,231.70 444.80,231.91 445.16,232.02 445.52,231.90 445.88,232.38 446.24,231.90 446.60,231.69 446.97,231.97 447.33,232.08 447.69,231.87 448.05,231.91 448.41,231.49 448.77,232.02 449.13,232.03 449.49,231.75 449.85,231.30 450.21,231.19 450.57,231.26 450.93,231.38 451.31,230.56 451.69,230.80 452.07,230.79 452.45,229.94 452.83,229.63 453.21,229.54 453.59,228.66 453.97,228.48 454.34,227.74 454.70,226.95 455.06,225.95 455.42,224.40 455.79,224.49 456.15,223.21 456.51,222.40 456.88,221.58 457.24,220.43 457.60,219.75 457.96,217.58 458.33,217.65 458.93,225.68 459.44,217.65 459.85,217.65 460.25,217.19 460.66,218.44 461.06,217.74 461.47,217.41 461.87,217.65 462.25,216.42 462.62,217.36 463.00,216.43 463.37,215.08 463.75,214.69 464.12,215.66 464.49,214.50 464.87,213.54 465.24,213.95 465.62,213.27 465.98,212.56 466.34,212.27 466.70,211.24 467.07,211.89 467.43,211.29 467.79,211.74 468.15,210.54 468.51,211.18 468.87,210.45 469.24,210.47 469.60,210.28 469.96,210.36 470.32,209.84 470.68,208.89 471.04,208.94 471.39,209.77 471.75,210.40 472.10,208.80 472.45,210.15 472.81,208.80 473.16,209.73 473.52,210.37 473.87,209.40 474.23,210.42 474.59,209.10 474.95,210.04 475.31,210.09 475.67,208.50 476.03,207.63 476.39,207.78 476.75,206.97 477.11,207.43 477.47,206.83 477.77,201.76 478.08,207.73 478.53,207.69 478.99,208.20 479.36,207.52 479.74,205.95 480.12,204.77 480.49,203.52 480.87,202.25 481.24,200.07 481.62,199.54 482.13,197.78 482.63,194.48 483.01,196.26 483.39,197.24 483.77,196.67 484.15,198.86 484.52,199.39 484.88,201.06 485.25,199.82 485.61,200.31 485.97,201.76" fill="none" stroke="#2a84c6" stroke-width="1.3" stroke-linejoin="round"/>
<text x="426.50" y="283.00" font-size="8.8" fill="#ececec" text-anchor="middle" font-weight="normal" stroke="#ececec" stroke-width="0.2">Battery Current</text>
<line x1="365.50" y1="291.40" x2="496.00" y2="291.40" stroke="#474747" stroke-width="0.7"/>
<text transform="translate(364.80,293.60) scale(0.86,1)" x="0" y="0" font-size="6.3" fill="#cfcfcf" text-anchor="end" font-weight="normal" >8</text>
<line x1="365.50" y1="304.60" x2="496.00" y2="304.60" stroke="#474747" stroke-width="0.7"/>
<text transform="translate(364.80,306.80) scale(0.86,1)" x="0" y="0" font-size="6.3" fill="#cfcfcf" text-anchor="end" font-weight="normal" >6</text>
<line x1="365.50" y1="317.80" x2="496.00" y2="317.80" stroke="#474747" stroke-width="0.7"/>
<text transform="translate(364.80,320.00) scale(0.86,1)" x="0" y="0" font-size="6.3" fill="#cfcfcf" text-anchor="end" font-weight="normal" >4</text>
<line x1="365.50" y1="331.00" x2="496.00" y2="331.00" stroke="#474747" stroke-width="0.7"/>
<text transform="translate(364.80,333.20) scale(0.86,1)" x="0" y="0" font-size="6.3" fill="#cfcfcf" text-anchor="end" font-weight="normal" >2</text>
<line x1="365.50" y1="344.20" x2="496.00" y2="344.20" stroke="#474747" stroke-width="0.7"/>
<text transform="translate(364.80,346.40) scale(0.86,1)" x="0" y="0" font-size="6.3" fill="#cfcfcf" text-anchor="end" font-weight="normal" >0</text>
<line x1="369.00" y1="288.40" x2="369.00" y2="348.80" stroke="#474747" stroke-width="0.7"/>
<text transform="translate(369.00,354.80) scale(0.86,1)" x="0" y="0" font-size="6.3" fill="#cfcfcf" text-anchor="middle" font-weight="normal" >01:00</text>
<line x1="390.64" y1="288.40" x2="390.64" y2="348.80" stroke="#474747" stroke-width="0.7"/>
<text transform="translate(390.64,354.80) scale(0.86,1)" x="0" y="0" font-size="6.3" fill="#cfcfcf" text-anchor="middle" font-weight="normal" >03:00</text>
<line x1="412.27" y1="288.40" x2="412.27" y2="348.80" stroke="#474747" stroke-width="0.7"/>
<text transform="translate(412.27,354.80) scale(0.86,1)" x="0" y="0" font-size="6.3" fill="#cfcfcf" text-anchor="middle" font-weight="normal" >05:00</text>
<line x1="433.91" y1="288.40" x2="433.91" y2="348.80" stroke="#474747" stroke-width="0.7"/>
<text transform="translate(433.91,354.80) scale(0.86,1)" x="0" y="0" font-size="6.3" fill="#cfcfcf" text-anchor="middle" font-weight="normal" >07:00</text>
<line x1="455.55" y1="288.40" x2="455.55" y2="348.80" stroke="#474747" stroke-width="0.7"/>
<text transform="translate(455.55,354.80) scale(0.86,1)" x="0" y="0" font-size="6.3" fill="#cfcfcf" text-anchor="middle" font-weight="normal" >09:00</text>
<line x1="488.00" y1="288.40" x2="488.00" y2="348.80" stroke="#474747" stroke-width="0.7"/>
<text transform="translate(488.00,354.80) scale(0.86,1)" x="0" y="0" font-size="6.3" fill="#cfcfcf" text-anchor="middle" font-weight="normal" >12:00</text>
<polyline points="376.73,344.20 377.11,344.20 377.49,344.20 377.87,344.20 378.25,344.20 378.63,344.20 379.00,344.20 379.38,344.20 379.76,344.20 380.14,344.20 380.52,344.20 380.90,344.20 381.28,344.20 381.66,344.20 382.03,344.20 382.41,344.20 382.79,344.20 383.17,344.20 383.55,344.20 383.93,344.20 384.31,344.20 384.69,344.20 385.06,344.20 385.44,344.20 385.82,344.20 386.20,344.20 386.58,344.20 386.96,344.20 387.34,344.20 387.72,344.20 388.10,344.20 388.47,344.20 388.85,344.20 389.23,344.20 389.61,344.20 389.99,344.20 390.37,344.20 390.75,344.20 391.13,344.20 391.50,344.20 391.88,344.20 392.26,344.20 392.64,344.20 393.02,344.20 393.40,344.20 393.78,344.20 394.16,344.20 394.53,344.20 394.91,344.20 395.29,344.20 395.67,344.20 396.05,344.20 396.43,344.20 396.81,344.20 397.19,344.20 397.57,344.20 397.94,344.20 398.32,344.20 398.70,344.20 399.08,344.20 399.46,344.20 399.84,344.20 400.22,344.20 400.60,344.20 400.97,344.20 401.35,344.20 401.73,344.20 402.11,344.20 402.49,344.20 402.87,344.20 403.25,344.20 403.63,344.20 404.00,344.20 404.38,344.20 404.76,344.20 405.14,344.20 405.52,344.20 405.90,344.20 406.28,344.20 406.66,344.20 407.03,344.20 407.41,344.20 407.79,344.20 408.17,344.20 408.55,344.20 408.93,344.20 409.31,344.20 409.69,344.20 410.07,344.20 410.44,344.20 410.82,344.20 411.20,344.20 411.58,344.20 411.96,344.20 412.34,344.20 412.72,344.20 413.10,344.20 413.47,344.20 413.85,344.20 414.23,344.20 414.61,344.20 414.99,344.20 415.37,344.20 415.75,344.20 416.13,344.20 416.50,344.20 416.88,344.20 417.26,344.20 417.64,344.20 418.02,344.20 418.40,344.20 418.78,344.20 419.16,344.20 419.54,344.20 419.91,344.20 420.29,344.20 420.67,344.20 421.05,344.20 421.43,344.20 421.81,344.20 422.19,344.20 422.57,344.20 422.94,344.20 423.32,344.20 423.70,344.20 424.08,344.20 424.46,344.20 424.84,344.20 425.23,343.93 425.62,343.72 426.01,344.01 426.40,343.36 426.79,343.74 427.18,343.31 427.57,343.54 427.96,342.99 428.35,343.25 428.74,342.76 429.13,342.76 429.53,342.43 429.93,342.21 430.32,342.22 430.72,341.76 431.12,341.49 431.51,341.85 431.91,341.40 432.31,340.93 432.70,340.87 433.10,340.87 433.49,340.76 433.89,340.16 434.29,340.25 434.67,340.82 435.05,340.70 435.44,340.96 435.82,341.70 436.21,341.90 436.59,342.22 436.97,342.40 437.36,342.31 437.76,342.35 438.15,341.94 438.54,341.85 438.93,342.16 439.32,341.72 439.71,342.17 440.11,342.09 440.50,341.65 440.89,341.50 441.28,341.41 441.67,341.23 442.06,341.24 442.46,341.55 442.85,341.17 443.24,340.99 443.63,341.18 444.03,341.36 444.43,341.02 444.83,341.14 445.23,341.07 445.63,340.77 446.04,340.56 446.44,340.28 446.84,340.73 447.24,340.41 447.64,340.01 448.04,340.07 448.44,340.13 448.84,340.23 449.24,339.89 449.64,339.89 450.05,339.68 450.45,339.08 450.85,338.72 451.25,338.46 451.66,337.49 452.07,336.19 452.47,335.40 452.88,334.33 453.28,333.06 453.69,332.39 454.09,331.39 454.50,330.11 454.91,329.12 455.30,328.08 455.69,326.73 456.09,325.89 456.62,325.89 456.84,344.20 457.16,344.20 457.37,325.39 457.91,325.55 458.45,325.39 458.86,326.20 459.26,327.59 459.67,326.75 460.08,327.59 460.49,327.40 460.88,326.59 461.26,324.62 461.65,325.94 462.04,321.96 462.42,321.86 462.81,320.57 463.19,320.47 463.58,319.37 463.97,318.93 464.35,318.00 464.74,316.70 465.13,316.93 465.53,316.02 465.92,315.39 466.31,314.61 466.71,312.14 467.10,311.84 467.49,311.68 467.89,313.00 468.28,311.58 468.67,310.03 469.07,309.52 469.45,309.93 469.83,311.82 470.20,312.17 470.58,313.61 470.97,312.84 471.36,315.38 471.75,315.53 472.14,314.85 472.53,316.19 472.92,315.62 473.31,313.20 473.70,313.07 474.09,313.12 474.48,310.45 474.87,309.67 475.27,310.02 475.67,306.86 476.06,305.77 476.46,305.87 476.86,305.06 477.29,306.49 477.72,310.45 478.26,313.94 478.80,315.62 479.24,311.72 479.67,308.51 480.10,303.41 480.54,302.98 480.97,299.68 481.35,294.88 481.73,292.14 482.16,296.81 482.48,294.65 482.92,301.12 483.35,293.22 483.78,305.42 484.32,298.67 484.86,308.30 485.30,303.99 485.73,309.52" fill="none" stroke="#2a84c6" stroke-width="1.3" stroke-linejoin="round"/>
<text x="572.50" y="88.00" font-size="8.8" fill="#ececec" text-anchor="middle" font-weight="normal" stroke="#ececec" stroke-width="0.2">Load Power</text>
<line x1="514.80" y1="96.70" x2="642.00" y2="96.70" stroke="#474747" stroke-width="0.7"/>
<text transform="translate(514.10,98.90) scale(0.86,1)" x="0" y="0" font-size="6.3" fill="#cfcfcf" text-anchor="end" font-weight="normal" >25</text>
<line x1="514.80" y1="109.90" x2="642.00" y2="109.90" stroke="#474747" stroke-width="0.7"/>
<text transform="translate(514.10,112.10) scale(0.86,1)" x="0" y="0" font-size="6.3" fill="#cfcfcf" text-anchor="end" font-weight="normal" >20</text>
<line x1="514.80" y1="123.10" x2="642.00" y2="123.10" stroke="#474747" stroke-width="0.7"/>
<text transform="translate(514.10,125.30) scale(0.86,1)" x="0" y="0" font-size="6.3" fill="#cfcfcf" text-anchor="end" font-weight="normal" >15</text>
<line x1="514.80" y1="136.30" x2="642.00" y2="136.30" stroke="#474747" stroke-width="0.7"/>
<text transform="translate(514.10,138.50) scale(0.86,1)" x="0" y="0" font-size="6.3" fill="#cfcfcf" text-anchor="end" font-weight="normal" >10</text>
<line x1="514.80" y1="149.50" x2="642.00" y2="149.50" stroke="#474747" stroke-width="0.7"/>
<text transform="translate(514.10,151.70) scale(0.86,1)" x="0" y="0" font-size="6.3" fill="#cfcfcf" text-anchor="end" font-weight="normal" >5</text>
<line x1="518.30" y1="93.70" x2="518.30" y2="154.10" stroke="#474747" stroke-width="0.7"/>
<text transform="translate(518.30,160.10) scale(0.86,1)" x="0" y="0" font-size="6.3" fill="#cfcfcf" text-anchor="middle" font-weight="normal" >01:00</text>
<line x1="539.34" y1="93.70" x2="539.34" y2="154.10" stroke="#474747" stroke-width="0.7"/>
<text transform="translate(539.34,160.10) scale(0.86,1)" x="0" y="0" font-size="6.3" fill="#cfcfcf" text-anchor="middle" font-weight="normal" >03:00</text>
<line x1="560.37" y1="93.70" x2="560.37" y2="154.10" stroke="#474747" stroke-width="0.7"/>
<text transform="translate(560.37,160.10) scale(0.86,1)" x="0" y="0" font-size="6.3" fill="#cfcfcf" text-anchor="middle" font-weight="normal" >05:00</text>
<line x1="581.41" y1="93.70" x2="581.41" y2="154.10" stroke="#474747" stroke-width="0.7"/>
<text transform="translate(581.41,160.10) scale(0.86,1)" x="0" y="0" font-size="6.3" fill="#cfcfcf" text-anchor="middle" font-weight="normal" >07:00</text>
<line x1="602.45" y1="93.70" x2="602.45" y2="154.10" stroke="#474747" stroke-width="0.7"/>
<text transform="translate(602.45,160.10) scale(0.86,1)" x="0" y="0" font-size="6.3" fill="#cfcfcf" text-anchor="middle" font-weight="normal" >09:00</text>
<line x1="634.00" y1="93.70" x2="634.00" y2="154.10" stroke="#474747" stroke-width="0.7"/>
<text transform="translate(634.00,160.10) scale(0.86,1)" x="0" y="0" font-size="6.3" fill="#cfcfcf" text-anchor="middle" font-weight="normal" >12:00</text>
<polyline points="525.35,104.09 525.66,109.37 525.87,110.28 526.06,108.93 526.25,109.72 526.44,108.69 526.63,108.60 526.82,111.10 527.01,111.34 527.20,107.69 527.39,110.26 527.58,110.39 527.77,107.02 527.96,109.36 528.15,107.74 528.33,109.35 528.52,108.64 528.71,110.82 528.90,108.68 529.09,107.65 529.28,109.19 529.47,108.24 529.66,108.56 529.85,111.26 530.04,108.19 530.23,108.94 530.42,110.24 530.61,111.44 530.80,107.75 530.98,109.51 531.17,108.42 531.36,107.72 531.55,108.46 531.74,107.56 531.93,109.90 532.12,108.11 532.31,109.70 532.50,107.53 532.69,107.79 532.88,111.27 533.07,111.11 533.26,110.76 533.45,107.45 533.64,109.81 533.82,108.97 534.01,110.42 534.20,109.52 534.39,110.07 534.58,110.23 534.77,109.20 534.96,109.22 535.15,107.81 535.34,108.80 535.53,107.72 535.72,108.05 535.91,107.46 536.10,108.89 536.29,111.15 536.48,108.07 536.66,107.62 536.85,107.89 537.04,109.39 537.23,108.76 537.42,111.00 537.61,108.26 537.80,109.41 537.99,110.70 538.18,111.69 538.37,108.20 538.56,107.61 538.75,111.61 538.94,108.46 539.13,110.20 539.32,111.37 539.50,110.74 539.69,108.64 539.88,108.19 540.07,111.88 540.26,109.36 540.45,111.89 540.64,108.92 540.83,110.65 541.02,108.22 541.21,107.78 541.40,109.90 541.59,107.72 541.78,110.79 541.97,111.83 542.16,109.52 542.34,112.05 542.53,111.33 542.72,110.40 542.91,109.51 543.10,111.54 543.29,112.05 543.48,108.40 543.67,110.87 543.86,108.02 544.05,108.30 544.24,110.61 544.43,110.26 544.62,110.00 544.81,109.46 545.00,109.69 545.18,109.86 545.37,109.60 545.56,108.19 545.75,110.12 545.94,110.47 546.13,109.19 546.32,111.34 546.51,111.07 546.70,108.08 546.89,110.12 547.08,110.01 547.27,112.40 547.46,110.62 547.65,109.89 547.84,112.39 548.02,109.76 548.21,109.69 548.40,112.24 548.59,109.73 548.78,110.46 548.97,109.52 549.16,110.98 549.35,109.42 549.54,109.29 549.73,112.48 549.92,112.32 550.11,109.60 550.30,108.33 550.49,111.50 550.67,110.60 550.86,110.01 551.05,111.22 551.24,111.04 551.43,111.28 551.62,111.04 551.81,110.04 552.00,111.36 552.19,111.03 552.38,109.29 552.57,112.60 552.76,110.21 552.95,109.48 553.14,111.38 553.33,111.78 553.51,109.21 553.70,111.72 553.89,111.96 554.08,110.87 554.27,109.72 554.46,112.37 554.65,111.40 554.84,111.36 555.03,109.15 555.22,110.92 555.41,109.08 555.60,112.13 555.96,105.68 556.59,110.43 557.01,134.19 557.43,135.24 557.85,136.28 558.04,134.29 558.23,132.81 558.42,135.55 558.61,136.99 558.79,137.65 558.98,135.06 559.17,137.20 559.36,133.30 559.55,133.10 559.74,137.25 559.93,136.65 560.12,133.30 560.31,134.34 560.50,133.30 560.69,136.22 560.88,137.59 561.07,136.56 561.26,133.38 561.45,136.69 561.63,136.22 561.82,135.77 562.01,135.75 562.20,135.82 562.39,132.58 562.58,137.42 562.77,138.38 562.96,132.44 563.15,132.84 563.34,132.16 563.53,135.66 563.72,132.39 563.91,132.54 564.10,137.00 564.29,133.69 564.47,133.11 564.66,134.21 564.85,135.12 565.04,136.58 565.23,136.25 565.42,136.97 565.61,137.98 565.80,134.68 565.99,136.59 566.18,133.28 566.37,138.13 566.56,132.69 566.75,134.02 566.94,132.56 567.13,132.73 567.31,132.71 567.50,134.76 567.69,138.33 567.88,133.69 568.07,137.32 568.26,136.51 568.45,134.21 568.64,135.09 568.83,135.79 569.02,132.46 569.21,134.53 569.40,136.25 569.59,136.81 569.78,132.95 569.97,135.39 570.15,133.46 570.34,136.18 570.53,137.16 570.72,135.02 570.91,133.24 571.10,137.33 571.29,133.40 571.48,132.57 571.67,133.30 571.86,133.19 572.05,138.36 572.24,134.43 572.43,132.95 572.62,138.10 572.81,136.69 572.99,136.71 573.18,135.07 573.37,135.73 573.56,135.42 573.75,133.49 573.94,138.94 574.13,138.94 574.32,137.61 574.51,137.62 574.70,137.98 574.89,132.24 575.08,133.00 575.27,137.87 575.46,135.23 575.65,136.41 575.83,136.42 576.02,136.19 576.21,134.31 576.40,134.70 576.59,136.13 576.78,137.20 576.97,136.33 577.16,137.63 577.35,134.89 577.54,133.88 577.73,136.00 577.92,137.91 578.11,137.28 578.30,136.05 578.49,134.58 578.67,133.45 578.86,136.00 579.05,133.34 579.24,134.47 579.43,135.68 579.62,136.05 579.81,135.27 580.00,133.96 580.19,135.75 580.38,134.01 580.57,135.49 580.76,136.86 580.95,135.02 581.14,134.01 581.32,137.96 581.51,135.72 581.70,135.71 581.89,132.84 582.08,132.48 582.27,136.04 582.46,138.41 582.65,133.40 582.84,136.75 583.03,135.47 583.22,137.63 583.41,133.26 583.60,134.22 583.79,132.79 583.98,133.39 584.16,134.18 584.35,133.76 584.54,134.84 584.73,137.76 584.92,134.69 585.11,138.38 585.30,137.50 585.49,133.51 585.68,138.13 585.87,137.83 586.06,137.78 586.25,132.83 586.44,137.28 586.63,138.26 586.82,133.08 587.00,137.64 587.19,133.06 587.38,134.14 587.57,133.11 587.76,132.38 587.95,134.74 588.14,133.35 588.33,138.18 588.52,133.55 588.71,135.17 588.90,133.88 589.09,137.74 589.28,133.67 589.47,132.49 589.66,138.02 589.84,136.36 590.03,134.84 590.22,133.17 590.41,136.88 590.60,137.27 590.79,136.83 590.98,134.51 591.17,133.64 591.36,135.92 591.55,136.08 591.74,135.90 591.93,136.19 592.12,135.76 592.31,137.88 592.50,135.24 592.68,132.21 592.87,135.73 593.06,133.58 593.25,137.27 593.44,133.88 593.63,133.44 593.82,133.93 594.01,134.90 594.20,135.08 594.39,134.04 594.58,132.40 594.77,137.11 594.96,137.42 595.15,133.26 595.34,132.16 595.52,134.66 595.71,135.10 595.90,133.32 596.09,136.67 596.28,136.13 596.47,136.53 596.66,134.05 596.85,135.74 597.04,136.23 597.23,133.30 597.42,131.60 597.61,135.74 597.80,133.12 597.99,134.94 598.18,137.00 598.36,136.97 598.55,135.78 598.74,136.06 598.93,137.26 599.12,134.34 599.31,134.93 599.50,136.23 599.69,135.01 599.88,135.22 600.07,132.33 600.26,136.30 600.45,130.90 600.64,134.11 600.83,133.32 601.01,134.12 601.20,131.77 601.39,131.83 601.58,133.47 601.77,133.92 601.96,132.38 602.15,131.49 602.34,134.35 602.53,132.21 602.72,130.74 602.91,133.84 603.10,135.31 603.29,135.25 603.48,132.16 603.67,132.40 603.85,130.58 604.04,131.21 604.23,135.06 604.42,135.36 604.61,134.90 604.80,135.32 604.99,132.01 605.18,131.01 605.37,130.72 605.56,134.77 605.75,130.88 605.94,134.34 606.13,133.62 606.32,131.65 606.51,135.70 606.69,135.63 606.88,130.90 607.07,134.31 607.26,133.86 607.45,132.42 607.64,131.79 607.83,135.99 608.02,133.89 608.21,133.21 608.40,132.87 608.59,134.59 608.78,132.18 608.97,129.81 609.16,133.36 609.35,132.35 609.53,135.02 609.72,134.00 609.91,131.50 610.10,134.97 610.29,130.04 610.48,129.87 610.67,134.98 610.86,129.60 611.05,133.17 611.24,130.62 611.43,130.68 611.62,133.58 611.81,131.14 612.00,131.25 612.19,130.26 612.37,133.65 612.56,130.53 612.75,129.19 612.94,130.98 613.13,131.82 613.32,134.47 613.51,132.03 613.70,132.90 613.89,130.55 614.08,130.77 614.27,131.45 614.46,133.86 614.65,130.89 614.84,130.96 615.03,133.79 615.21,129.26 615.40,130.71 615.59,134.06 615.78,128.90 615.97,133.88 616.16,132.65 616.35,130.16 616.54,130.91 616.73,131.15 616.92,130.53 617.11,131.70 617.30,132.60 617.49,133.43 617.68,128.18 617.87,129.95 618.05,129.68 618.24,130.99 618.43,129.71 618.62,132.09 618.81,132.66 619.00,131.88 619.19,128.75 619.38,133.99 619.57,131.03 619.76,132.63 619.95,129.29 620.14,131.89 620.33,132.00 620.52,131.52 620.71,130.62 620.89,129.13 621.08,131.75 621.27,128.59 621.46,133.22 621.65,132.19 621.84,133.24 622.03,133.13 622.22,128.88 622.41,129.18 622.60,132.58 622.79,132.53 622.98,131.06 623.17,128.96 623.36,126.25 623.54,126.22 623.73,129.83 623.92,132.62 624.11,131.00 624.30,132.27 624.49,130.12 624.68,129.83 624.87,132.12 625.06,131.79 625.25,128.39 625.44,133.13 625.63,128.20 625.82,127.61 626.01,127.21 626.20,130.77 626.38,129.67 626.57,129.45 626.76,129.10 626.95,126.89 627.14,128.70 627.33,131.13 627.52,127.55 627.71,129.90 627.90,129.13 628.09,128.30 628.28,132.86 628.47,127.97 628.66,128.63 628.85,129.67 629.04,129.44 629.22,124.28 629.41,131.48 629.60,129.32 629.79,132.41 629.98,129.44 630.17,128.49 630.36,129.74 630.55,128.94 630.74,126.42 630.93,121.38 631.12,121.35 631.31,127.39 631.50,128.43 631.69,132.03 631.88,130.04 632.11,129.12" fill="none" stroke="#2a84c6" stroke-width="1.3" stroke-linejoin="round"/>
<text x="572.50" y="185.40" font-size="8.8" fill="#ececec" text-anchor="middle" font-weight="normal" stroke="#ececec" stroke-width="0.2">Load Voltage</text>
<line x1="519.10" y1="194.00" x2="642.00" y2="194.00" stroke="#474747" stroke-width="0.7"/>
<text transform="translate(518.40,196.20) scale(0.86,1)" x="0" y="0" font-size="6.3" fill="#cfcfcf" text-anchor="end" font-weight="normal" >13.8</text>
<line x1="519.10" y1="204.56" x2="642.00" y2="204.56" stroke="#474747" stroke-width="0.7"/>
<text transform="translate(518.40,206.76) scale(0.86,1)" x="0" y="0" font-size="6.3" fill="#cfcfcf" text-anchor="end" font-weight="normal" >13.6</text>
<line x1="519.10" y1="215.12" x2="642.00" y2="215.12" stroke="#474747" stroke-width="0.7"/>
<text transform="translate(518.40,217.32) scale(0.86,1)" x="0" y="0" font-size="6.3" fill="#cfcfcf" text-anchor="end" font-weight="normal" >13.4</text>
<line x1="519.10" y1="225.68" x2="642.00" y2="225.68" stroke="#474747" stroke-width="0.7"/>
<text transform="translate(518.40,227.88) scale(0.86,1)" x="0" y="0" font-size="6.3" fill="#cfcfcf" text-anchor="end" font-weight="normal" >13.2</text>
<line x1="519.10" y1="236.24" x2="642.00" y2="236.24" stroke="#474747" stroke-width="0.7"/>
<text transform="translate(518.40,238.44) scale(0.86,1)" x="0" y="0" font-size="6.3" fill="#cfcfcf" text-anchor="end" font-weight="normal" >13</text>
<line x1="519.10" y1="246.80" x2="642.00" y2="246.80" stroke="#474747" stroke-width="0.7"/>
<text transform="translate(518.40,249.00) scale(0.86,1)" x="0" y="0" font-size="6.3" fill="#cfcfcf" text-anchor="end" font-weight="normal" >12.8</text>
<line x1="522.60" y1="191.00" x2="522.60" y2="251.40" stroke="#474747" stroke-width="0.7"/>
<text transform="translate(522.60,257.40) scale(0.86,1)" x="0" y="0" font-size="6.3" fill="#cfcfcf" text-anchor="middle" font-weight="normal" >01:00</text>
<line x1="542.85" y1="191.00" x2="542.85" y2="251.40" stroke="#474747" stroke-width="0.7"/>
<text transform="translate(542.85,257.40) scale(0.86,1)" x="0" y="0" font-size="6.3" fill="#cfcfcf" text-anchor="middle" font-weight="normal" >03:00</text>
<line x1="563.11" y1="191.00" x2="563.11" y2="251.40" stroke="#474747" stroke-width="0.7"/>
<text transform="translate(563.11,257.40) scale(0.86,1)" x="0" y="0" font-size="6.3" fill="#cfcfcf" text-anchor="middle" font-weight="normal" >05:00</text>
<line x1="583.36" y1="191.00" x2="583.36" y2="251.40" stroke="#474747" stroke-width="0.7"/>
<text transform="translate(583.36,257.40) scale(0.86,1)" x="0" y="0" font-size="6.3" fill="#cfcfcf" text-anchor="middle" font-weight="normal" >07:00</text>
<line x1="603.62" y1="191.00" x2="603.62" y2="251.40" stroke="#474747" stroke-width="0.7"/>
<text transform="translate(603.62,257.40) scale(0.86,1)" x="0" y="0" font-size="6.3" fill="#cfcfcf" text-anchor="middle" font-weight="normal" >09:00</text>
<line x1="634.00" y1="191.00" x2="634.00" y2="251.40" stroke="#474747" stroke-width="0.7"/>
<text transform="translate(634.00,257.40) scale(0.86,1)" x="0" y="0" font-size="6.3" fill="#cfcfcf" text-anchor="middle" font-weight="normal" >12:00</text>
<polyline points="530.20,233.07 530.56,233.39 530.92,233.00 531.29,233.07 531.65,232.95 532.02,233.72 532.38,233.73 532.74,233.88 533.11,233.86 533.47,233.39 533.83,234.09 534.20,233.73 534.56,234.13 534.93,234.10 535.29,234.02 535.65,233.66 536.02,233.96 536.38,234.65 536.75,234.44 537.11,234.64 537.47,233.93 537.84,234.06 538.20,234.13 538.57,234.17 538.93,234.32 539.29,234.17 539.66,234.39 540.02,235.02 540.39,234.46 540.75,234.90 541.11,234.68 541.48,234.95 541.84,235.08 542.21,235.21 542.57,235.34 542.94,235.33 543.30,235.51 543.66,235.77 544.03,235.09 544.39,235.17 544.76,235.03 545.12,235.40 545.49,235.60 545.85,235.45 546.22,236.16 546.58,235.65 546.95,235.95 547.31,236.29 547.68,236.32 548.04,236.04 548.40,236.38 548.77,236.22 549.13,236.24 549.50,236.16 549.86,236.40 550.22,236.71 550.59,236.36 550.95,236.66 551.32,236.68 551.68,236.75 552.04,236.60 552.41,236.94 552.77,236.35 553.14,236.06 553.50,236.69 553.86,236.36 554.23,236.17 554.59,237.13 554.95,237.06 555.32,236.38 555.68,236.38 556.05,236.61 556.41,237.15 556.77,236.91 557.14,236.45 557.50,236.46 557.87,236.58 558.23,237.24 558.59,236.58 558.96,236.98 559.31,236.36 559.67,235.25 560.02,235.11 560.37,233.97 560.74,233.48 561.10,233.88 561.46,233.76 561.82,234.31 562.18,233.89 562.54,233.94 562.90,233.93 563.27,234.19 563.63,233.81 563.99,234.22 564.35,234.28 564.71,234.43 565.07,233.89 565.43,234.50 565.79,234.39 566.16,234.56 566.52,233.96 566.88,234.06 567.24,234.09 567.60,234.63 567.96,234.21 568.32,234.32 568.68,234.60 569.05,234.70 569.41,233.66 569.77,234.59 570.13,234.41 570.49,234.45 570.85,234.12 571.21,234.67 571.57,234.27 571.94,234.38 572.30,233.90 572.66,234.78 573.02,234.44 573.38,234.28 573.74,234.29 574.10,233.67 574.47,234.02 574.83,233.94 575.19,233.61 575.55,233.88 575.92,234.04 576.28,233.42 576.64,232.86 577.00,232.92 577.37,233.30 577.73,232.73 578.09,232.43 578.45,232.93 578.81,232.46 579.18,232.58 579.54,232.57 579.90,232.41 580.26,232.37 580.63,232.09 580.99,232.30 581.35,231.79 581.71,232.00 582.07,231.16 582.44,231.21 582.80,231.71 583.16,231.07 583.53,231.06 583.90,231.96 584.28,231.93 584.65,232.13 585.02,232.65 585.39,232.76 585.75,232.93 586.11,232.74 586.47,233.01 586.83,232.20 587.19,232.95 587.55,232.16 587.91,232.75 588.28,232.62 588.64,232.49 589.00,232.82 589.36,232.68 589.72,232.39 590.08,232.26 590.44,231.76 590.80,231.59 591.16,232.55 591.52,231.99 591.88,232.37 592.24,231.62 592.60,232.08 592.97,231.44 593.33,231.76 593.69,232.16 594.05,232.25 594.41,231.95 594.77,231.25 595.13,231.97 595.49,231.58 595.85,231.65 596.21,231.63 596.57,231.11 596.93,231.38 597.31,231.32 597.69,230.43 598.07,230.12 598.45,229.47 598.83,229.55 599.21,228.76 599.59,228.90 599.97,228.48 600.34,227.50 600.70,226.55 601.06,225.41 601.42,224.45 601.79,224.37 602.15,223.45 602.51,222.13 602.88,220.93 603.24,220.32 603.60,219.67 603.96,217.48 604.33,217.65 604.93,225.68 605.44,217.65 605.85,218.12 606.25,218.61 606.66,218.69 607.06,218.75 607.47,217.13 607.87,217.65 608.25,218.13 608.62,216.28 609.00,215.49 609.37,214.74 609.75,214.75 610.12,215.20 610.49,214.30 610.87,213.37 611.24,213.21 611.62,213.27 611.98,213.45 612.34,212.04 612.70,213.24 613.07,212.46 613.43,210.55 613.79,211.46 614.15,211.62 614.51,210.11 614.87,210.57 615.24,211.29 615.60,210.92 615.96,210.08 616.32,209.59 616.68,208.89 617.04,208.03 617.39,209.78 617.75,208.54 618.10,208.68 618.45,209.85 618.81,208.66 619.16,209.35 619.52,210.15 619.87,210.82 620.23,210.42 620.59,210.11 620.95,208.69 621.31,209.14 621.67,209.54 622.03,208.72 622.39,208.08 622.75,208.35 623.11,207.06 623.47,206.83 623.77,201.76 624.08,207.73 624.53,209.05 624.99,208.20 625.36,206.22 625.74,206.48 626.12,205.41 626.49,203.05 626.87,202.47 627.24,199.89 627.62,199.54 628.13,197.02 628.63,194.48 629.01,195.52 629.39,195.89 629.77,198.43 630.15,198.86 630.52,198.87 630.88,199.67 631.25,200.77 631.61,200.11 631.97,201.76" fill="none" stroke="#2a84c6" stroke-width="1.3" stroke-linejoin="round"/>
<text x="572.50" y="283.00" font-size="8.8" fill="#ececec" text-anchor="middle" font-weight="normal" stroke="#ececec" stroke-width="0.2">Load Current</text>
<line x1="515.80" y1="291.40" x2="642.00" y2="291.40" stroke="#474747" stroke-width="0.7"/>
<text transform="translate(515.10,293.60) scale(0.86,1)" x="0" y="0" font-size="6.3" fill="#cfcfcf" text-anchor="end" font-weight="normal" >2</text>
<line x1="515.80" y1="309.00" x2="642.00" y2="309.00" stroke="#474747" stroke-width="0.7"/>
<text transform="translate(515.10,311.20) scale(0.86,1)" x="0" y="0" font-size="6.3" fill="#cfcfcf" text-anchor="end" font-weight="normal" >1.5</text>
<line x1="515.80" y1="326.60" x2="642.00" y2="326.60" stroke="#474747" stroke-width="0.7"/>
<text transform="translate(515.10,328.80) scale(0.86,1)" x="0" y="0" font-size="6.3" fill="#cfcfcf" text-anchor="end" font-weight="normal" >1</text>
<line x1="515.80" y1="344.20" x2="642.00" y2="344.20" stroke="#474747" stroke-width="0.7"/>
<text transform="translate(515.10,346.40) scale(0.86,1)" x="0" y="0" font-size="6.3" fill="#cfcfcf" text-anchor="end" font-weight="normal" >0.5</text>
<line x1="519.30" y1="288.40" x2="519.30" y2="348.80" stroke="#474747" stroke-width="0.7"/>
<text transform="translate(519.30,354.80) scale(0.86,1)" x="0" y="0" font-size="6.3" fill="#cfcfcf" text-anchor="middle" font-weight="normal" >01:00</text>
<line x1="540.15" y1="288.40" x2="540.15" y2="348.80" stroke="#474747" stroke-width="0.7"/>
<text transform="translate(540.15,354.80) scale(0.86,1)" x="0" y="0" font-size="6.3" fill="#cfcfcf" text-anchor="middle" font-weight="normal" >03:00</text>
<line x1="561.01" y1="288.40" x2="561.01" y2="348.80" stroke="#474747" stroke-width="0.7"/>
<text transform="translate(561.01,354.80) scale(0.86,1)" x="0" y="0" font-size="6.3" fill="#cfcfcf" text-anchor="middle" font-weight="normal" >05:00</text>
<line x1="581.86" y1="288.40" x2="581.86" y2="348.80" stroke="#474747" stroke-width="0.7"/>
<text transform="translate(581.86,354.80) scale(0.86,1)" x="0" y="0" font-size="6.3" fill="#cfcfcf" text-anchor="middle" font-weight="normal" >07:00</text>
<line x1="602.72" y1="288.40" x2="602.72" y2="348.80" stroke="#474747" stroke-width="0.7"/>
<text transform="translate(602.72,354.80) scale(0.86,1)" x="0" y="0" font-size="6.3" fill="#cfcfcf" text-anchor="middle" font-weight="normal" >09:00</text>
<line x1="634.00" y1="288.40" x2="634.00" y2="348.80" stroke="#474747" stroke-width="0.7"/>
<text transform="translate(634.00,354.80) scale(0.86,1)" x="0" y="0" font-size="6.3" fill="#cfcfcf" text-anchor="middle" font-weight="normal" >12:00</text>
<polyline points="526.29,301.17 526.60,307.24 526.81,306.36 527.00,305.76 527.18,305.50 527.37,304.76 527.56,305.80 527.75,304.88 527.93,309.45 528.12,307.23 528.31,304.80 528.50,306.32 528.68,305.04 528.87,309.07 529.06,307.26 529.25,308.41 529.44,306.90 529.62,306.76 529.81,309.63 530.00,308.60 530.19,308.29 530.37,305.05 530.56,305.83 530.75,308.93 530.94,305.69 531.12,309.06 531.31,306.62 531.50,309.14 531.69,309.78 531.88,305.36 532.06,308.74 532.25,308.72 532.44,304.82 532.63,305.39 532.81,308.38 533.00,304.96 533.19,307.12 533.38,306.42 533.56,308.85 533.75,305.10 533.94,306.39 534.13,304.99 534.32,305.37 534.50,308.42 534.69,308.11 534.88,309.11 535.07,309.23 535.25,309.65 535.44,308.45 535.63,306.92 535.82,309.99 536.00,306.56 536.19,308.31 536.38,308.46 536.57,305.87 536.76,307.61 536.94,308.46 537.13,307.62 537.32,306.49 537.51,309.81 537.69,305.13 537.88,310.00 538.07,306.30 538.26,305.83 538.44,310.05 538.63,306.14 538.82,308.30 539.01,307.23 539.20,310.14 539.38,309.96 539.57,309.28 539.76,305.34 539.95,309.22 540.13,306.38 540.32,305.50 540.51,305.45 540.70,308.51 540.88,308.46 541.07,307.61 541.26,306.34 541.45,309.75 541.64,306.50 541.82,306.26 542.01,305.95 542.20,310.16 542.39,305.53 542.57,309.90 542.76,308.63 542.95,307.27 543.14,305.71 543.32,308.67 543.51,305.70 543.70,307.64 543.89,308.84 544.08,308.83 544.26,309.55 544.45,310.06 544.64,309.71 544.83,306.97 545.01,305.41 545.20,309.68 545.39,310.26 545.58,305.49 545.76,307.81 545.95,308.47 546.14,309.34 546.33,307.53 546.52,306.35 546.70,308.26 546.89,308.44 547.08,310.31 547.27,305.94 547.45,310.45 547.64,308.11 547.83,306.36 548.02,309.98 548.20,306.93 548.39,305.82 548.58,307.46 548.77,306.67 548.96,310.15 549.14,308.49 549.33,309.96 549.52,306.42 549.71,309.23 549.89,308.44 550.08,305.66 550.27,306.42 550.46,305.80 550.64,308.47 550.83,308.31 551.02,307.08 551.21,308.37 551.40,309.34 551.58,308.78 551.77,310.10 551.96,308.93 552.15,305.82 552.33,305.98 552.52,307.69 552.71,308.35 552.90,309.18 553.08,310.46 553.27,309.53 553.46,306.94 553.65,306.52 553.84,309.11 554.02,306.95 554.21,307.02 554.40,307.44 554.59,307.61 554.77,307.13 554.96,309.16 555.15,307.43 555.34,309.60 555.52,308.56 555.71,307.13 555.90,307.54 556.09,309.57 556.28,306.26 556.63,302.99 557.26,308.30 557.67,332.58 558.09,333.64 558.51,332.55 558.69,333.05 558.88,337.20 559.07,333.30 559.26,335.46 559.44,332.39 559.63,333.91 559.82,331.33 560.01,332.57 560.20,331.47 560.38,334.75 560.57,332.59 560.76,331.91 560.95,331.25 561.13,334.73 561.32,331.14 561.51,330.94 561.70,332.27 561.88,330.17 562.07,330.31 562.26,333.51 562.45,333.43 562.64,336.07 562.82,331.19 563.01,330.45 563.20,333.81 563.39,332.25 563.57,332.04 563.76,331.96 563.95,336.03 564.14,331.60 564.32,333.05 564.51,332.43 564.70,334.22 564.89,332.74 565.08,331.64 565.26,332.64 565.45,332.03 565.64,337.08 565.83,336.12 566.01,334.07 566.20,332.55 566.39,335.69 566.58,332.29 566.76,332.69 566.95,336.98 567.14,333.85 567.33,335.63 567.52,336.89 567.70,336.31 567.89,334.97 568.08,335.96 568.27,335.87 568.45,337.02 568.64,333.89 568.83,334.51 569.02,332.83 569.20,332.98 569.39,335.55 569.58,330.70 569.77,337.28 569.96,334.33 570.14,335.25 570.33,334.30 570.52,336.44 570.71,331.23 570.89,334.56 571.08,337.02 571.27,332.81 571.46,336.59 571.64,333.31 571.83,334.81 572.02,333.05 572.21,330.30 572.40,331.32 572.58,334.23 572.77,331.36 572.96,332.60 573.15,334.59 573.33,336.25 573.52,332.94 573.71,333.17 573.90,330.31 574.08,330.23 574.27,332.85 574.46,337.89 574.65,337.89 574.84,337.28 575.02,336.50 575.21,333.16 575.40,332.80 575.59,336.26 575.77,332.70 575.96,330.79 576.15,334.54 576.34,334.14 576.52,335.63 576.71,335.16 576.90,330.20 577.09,334.52 577.28,330.28 577.46,330.63 577.65,332.94 577.84,335.39 578.03,330.14 578.21,333.67 578.40,334.26 578.59,334.96 578.78,330.11 578.96,333.70 579.15,335.20 579.34,333.81 579.53,336.40 579.72,332.75 579.90,334.05 580.09,335.15 580.28,331.59 580.47,331.26 580.65,337.19 580.84,333.40 581.03,335.29 581.22,330.47 581.40,331.59 581.59,335.49 581.78,335.33 581.97,336.16 582.16,330.08 582.34,335.15 582.53,332.85 582.72,333.82 582.91,337.28 583.09,332.88 583.28,331.87 583.47,336.42 583.66,331.74 583.84,335.09 584.03,333.40 584.22,334.83 584.41,335.12 584.60,333.42 584.78,333.90 584.97,334.65 585.16,331.85 585.35,332.98 585.53,337.02 585.72,335.44 585.91,333.96 586.10,330.60 586.28,330.81 586.47,333.31 586.66,337.18 586.85,331.61 587.04,334.17 587.22,333.09 587.41,332.12 587.60,332.68 587.79,333.77 587.97,330.64 588.16,334.47 588.35,334.43 588.54,331.08 588.72,335.85 588.91,335.12 589.10,331.24 589.29,336.80 589.48,331.19 589.66,332.22 589.85,334.13 590.04,335.20 590.23,331.59 590.41,330.65 590.60,336.24 590.79,333.80 590.98,333.28 591.16,333.66 591.35,334.87 591.54,336.16 591.73,333.01 591.92,331.37 592.10,336.78 592.29,335.61 592.48,331.31 592.67,331.51 592.85,332.44 593.04,337.07 593.23,331.96 593.42,330.07 593.60,329.90 593.79,332.04 593.98,336.77 594.17,330.97 594.36,335.48 594.54,332.35 594.73,330.09 594.92,331.81 595.11,335.99 595.29,334.82 595.48,330.24 595.67,335.81 595.86,332.43 596.04,333.83 596.23,335.65 596.42,332.26 596.61,336.46 596.80,335.96 596.98,333.96 597.17,336.17 597.36,336.25 597.55,332.46 597.73,331.21 597.92,330.20 598.11,335.59 598.30,333.40 598.48,335.91 598.67,335.89 598.86,332.90 599.05,329.61 599.24,333.69 599.42,335.99 599.61,331.29 599.80,335.24 599.99,331.72 600.17,332.61 600.36,329.64 600.55,332.20 600.74,331.69 600.92,334.28 601.11,332.15 601.30,334.29 601.49,330.65 601.68,332.33 601.86,335.09 602.05,334.33 602.24,333.31 602.43,330.62 602.61,334.66 602.80,330.74 602.99,331.14 603.18,335.27 603.36,331.00 603.55,335.18 603.74,334.91 603.93,331.46 604.12,334.03 604.30,329.35 604.49,332.21 604.68,333.33 604.87,329.86 605.05,335.42 605.24,330.33 605.43,335.20 605.62,334.46 605.80,328.60 605.99,330.55 606.18,333.86 606.37,334.62 606.56,328.35 606.74,330.57 606.93,329.41 607.12,334.34 607.31,330.78 607.49,332.73 607.68,333.57 607.87,332.83 608.06,330.76 608.24,332.67 608.43,332.37 608.62,334.17 608.81,329.08 609.00,330.39 609.18,329.22 609.37,331.90 609.56,328.83 609.75,331.24 609.93,330.67 610.12,330.78 610.31,329.54 610.50,332.03 610.68,334.18 610.87,334.62 611.06,333.36 611.25,334.52 611.44,328.30 611.62,331.25 611.81,329.19 612.00,334.70 612.19,331.26 612.37,328.17 612.56,330.12 612.75,331.48 612.94,331.19 613.12,333.83 613.31,333.40 613.50,333.35 613.69,331.75 613.88,331.64 614.06,328.01 614.25,333.30 614.44,332.53 614.63,332.33 614.81,333.15 615.00,332.21 615.19,332.56 615.38,330.74 615.56,333.99 615.75,327.47 615.94,331.49 616.13,327.32 616.32,329.12 616.50,329.19 616.69,330.64 616.88,327.16 617.07,333.17 617.25,329.13 617.44,331.85 617.63,329.04 617.82,326.64 618.00,332.71 618.19,332.41 618.38,333.67 618.57,332.14 618.76,333.23 618.94,330.85 619.13,326.65 619.32,331.07 619.51,331.43 619.69,330.26 619.88,331.58 620.07,328.29 620.26,328.37 620.44,332.38 620.63,331.79 620.82,328.62 621.01,326.64 621.20,328.76 621.38,330.31 621.57,326.31 621.76,333.35 621.95,332.93 622.13,327.67 622.32,330.33 622.51,332.97 622.70,329.27 622.88,326.03 623.07,329.44 623.26,330.64 623.45,324.67 623.64,324.64 623.82,326.57 624.01,329.51 624.20,326.25 624.39,332.65 624.57,331.24 624.76,332.62 624.95,330.07 625.14,332.50 625.32,331.06 625.51,329.92 625.70,330.64 625.89,332.47 626.08,332.54 626.26,325.71 626.45,331.46 626.64,329.03 626.83,329.78 627.01,328.82 627.20,332.05 627.39,330.35 627.58,331.83 627.76,328.64 627.95,325.85 628.14,328.18 628.33,326.27 628.52,330.93 628.70,332.34 628.89,328.51 629.08,328.87 629.27,322.67 629.45,329.62 629.64,327.78 629.83,327.02 630.02,325.63 630.20,330.02 630.39,328.96 630.58,326.19 630.77,330.55 630.96,319.41 631.14,319.38 631.33,331.47 631.52,326.46 631.71,326.09 631.89,329.75 632.12,328.36" fill="none" stroke="#2a84c6" stroke-width="1.3" stroke-linejoin="round"/>
<text x="135.00" y="283.00" font-size="8.8" fill="#ececec" text-anchor="middle" font-weight="normal" stroke="#ececec" stroke-width="0.2">Battery Temp</text>
<line x1="76.90" y1="291.40" x2="204.00" y2="291.40" stroke="#474747" stroke-width="0.7"/>
<text transform="translate(76.20,293.60) scale(0.86,1)" x="0" y="0" font-size="6.3" fill="#cfcfcf" text-anchor="end" font-weight="normal" >35</text>
<line x1="76.90" y1="304.60" x2="204.00" y2="304.60" stroke="#474747" stroke-width="0.7"/>
<text transform="translate(76.20,306.80) scale(0.86,1)" x="0" y="0" font-size="6.3" fill="#cfcfcf" text-anchor="end" font-weight="normal" >30</text>
<line x1="76.90" y1="317.80" x2="204.00" y2="317.80" stroke="#474747" stroke-width="0.7"/>
<text transform="translate(76.20,320.00) scale(0.86,1)" x="0" y="0" font-size="6.3" fill="#cfcfcf" text-anchor="end" font-weight="normal" >25</text>
<line x1="76.90" y1="331.00" x2="204.00" y2="331.00" stroke="#474747" stroke-width="0.7"/>
<text transform="translate(76.20,333.20) scale(0.86,1)" x="0" y="0" font-size="6.3" fill="#cfcfcf" text-anchor="end" font-weight="normal" >20</text>
<line x1="76.90" y1="344.20" x2="204.00" y2="344.20" stroke="#474747" stroke-width="0.7"/>
<text transform="translate(76.20,346.40) scale(0.86,1)" x="0" y="0" font-size="6.3" fill="#cfcfcf" text-anchor="end" font-weight="normal" >15</text>
<line x1="80.40" y1="288.40" x2="80.40" y2="348.80" stroke="#474747" stroke-width="0.7"/>
<text transform="translate(80.40,354.80) scale(0.86,1)" x="0" y="0" font-size="6.3" fill="#cfcfcf" text-anchor="middle" font-weight="normal" >01:00</text>
<line x1="101.42" y1="288.40" x2="101.42" y2="348.80" stroke="#474747" stroke-width="0.7"/>
<text transform="translate(101.42,354.80) scale(0.86,1)" x="0" y="0" font-size="6.3" fill="#cfcfcf" text-anchor="middle" font-weight="normal" >03:00</text>
<line x1="122.44" y1="288.40" x2="122.44" y2="348.80" stroke="#474747" stroke-width="0.7"/>
<text transform="translate(122.44,354.80) scale(0.86,1)" x="0" y="0" font-size="6.3" fill="#cfcfcf" text-anchor="middle" font-weight="normal" >05:00</text>
<line x1="143.45" y1="288.40" x2="143.45" y2="348.80" stroke="#474747" stroke-width="0.7"/>
<text transform="translate(143.45,354.80) scale(0.86,1)" x="0" y="0" font-size="6.3" fill="#cfcfcf" text-anchor="middle" font-weight="normal" >07:00</text>
<line x1="164.47" y1="288.40" x2="164.47" y2="348.80" stroke="#474747" stroke-width="0.7"/>
<text transform="translate(164.47,354.80) scale(0.86,1)" x="0" y="0" font-size="6.3" fill="#cfcfcf" text-anchor="middle" font-weight="normal" >09:00</text>
<line x1="196.00" y1="288.40" x2="196.00" y2="348.80" stroke="#474747" stroke-width="0.7"/>
<text transform="translate(196.00,354.80) scale(0.86,1)" x="0" y="0" font-size="6.3" fill="#cfcfcf" text-anchor="middle" font-weight="normal" >12:00</text>
<polyline points="87.86,330.31 88.94,330.82 90.03,330.96 91.11,330.98 92.19,330.99 93.28,331.54 94.36,331.75 95.44,331.88 96.53,331.74 97.61,332.33 98.69,332.15 99.78,332.40 100.86,332.93 101.94,332.90 103.10,332.98 104.26,333.13 105.41,333.26 106.57,332.99 107.72,333.66 108.88,333.80 110.04,333.32 111.19,333.76 112.35,333.80 113.40,334.09 114.45,334.11 115.50,334.18 116.55,333.91 117.60,334.48 118.65,334.58 119.70,334.45 120.75,334.57 121.81,334.41 122.86,334.80 123.96,334.71 125.07,335.13 126.18,335.35 127.29,335.07 128.40,335.09 129.51,335.82 130.61,335.49 131.72,335.53 132.83,335.79 133.94,336.18 135.05,336.12 136.22,335.84 137.39,335.78 138.57,336.03 139.74,335.65 140.91,335.82 142.09,335.54 143.18,335.61 144.27,335.21 145.36,334.99 146.45,334.74 147.54,334.36 148.63,334.02 149.72,333.72 150.81,333.80 152.10,332.85 153.39,332.19 154.67,331.67 155.96,331.21 157.12,329.87 158.27,328.49 159.43,326.83 160.60,325.31 161.78,323.91 162.95,322.39 164.12,321.31 165.30,319.81 166.47,318.17 167.52,317.02 168.57,316.33 169.62,315.38 170.67,314.88 171.72,313.73 172.81,312.83 173.90,311.53 174.99,310.73 176.09,309.54 177.18,309.08 178.27,307.94 179.36,306.75 180.45,305.97 181.54,305.42 182.63,304.61 183.72,304.17 184.81,303.87 185.90,303.29 186.99,302.14 188.08,302.10 189.17,301.27 190.22,300.77 191.27,299.98 192.32,299.05 193.37,298.26 194.42,297.79" fill="none" stroke="#2a84c6" stroke-width="1.3" stroke-linejoin="round"/>
<text x="135.00" y="86.30" font-size="8.8" fill="#ececec" text-anchor="middle" font-weight="normal" stroke="#ececec" stroke-width="0.2">Battery SOC</text>
<path d="M85.65,147.20 A49.2,49.2 0 0 1 184.05,147.20 L165.55,147.20 A30.7,30.7 0 0 0 104.15,147.20 Z" fill="#07b307"/>
<defs><linearGradient id="ng" x1="0" x2="1" y1="0" y2="0"><stop offset="0" stop-color="#f4f0d6"/><stop offset="0.6" stop-color="#e8e4c8"/><stop offset="1" stop-color="#8a8878"/></linearGradient></defs>
<path d="M157,145.8 L188.5,146.5 L188.5,147.5 L157,148.2 Z" fill="url(#ng)"/>
<text x="134.70" y="146.20" font-size="9.9" fill="#efebdc" text-anchor="middle" font-weight="normal" stroke="#efebdc" stroke-width="0.45">100%</text>
<text x="94.60" y="153.20" font-size="4.4" fill="#b4b4b4" text-anchor="middle" font-weight="normal" >0</text>
<text x="134.70" y="154.30" font-size="4.4" fill="#b4b4b4" text-anchor="middle" font-weight="normal" >%</text>
<text x="175.00" y="153.20" font-size="4.4" fill="#b4b4b4" text-anchor="middle" font-weight="normal" >100</text>
<clipPath id="c86"><circle cx="86.2" cy="197.6" r="16.9"/></clipPath>
<polygon points="68.20,182.60 68.80,182.65 69.40,182.72 70.00,182.79 70.60,182.87 71.20,182.95 71.80,183.03 72.40,183.11 73.00,183.17 73.60,183.21 74.20,183.24 74.80,183.25 75.40,183.24 76.00,183.21 76.60,183.17 77.20,183.11 77.80,183.03 78.40,182.95 79.00,182.87 79.60,182.79 80.20,182.72 80.80,182.65 81.40,182.60 82.00,182.57 82.60,182.55 83.20,182.55 83.80,182.58 84.40,182.62 85.00,182.67 85.60,182.74 86.20,182.82 86.80,182.90 87.40,182.98 88.00,183.06 88.60,183.13 89.20,183.18 89.80,183.22 90.40,183.25 91.00,183.25 91.60,183.23 92.20,183.20 92.80,183.15 93.40,183.08 94.00,183.01 94.60,182.93 95.20,182.85 95.80,182.77 96.40,182.69 97.00,182.63 97.60,182.59 98.20,182.56 98.80,182.55 99.40,182.56 100.00,182.59 100.60,182.63 101.20,182.69 101.80,182.77 102.40,182.85 103.00,182.93 103.60,183.01 104.20,183.08 104.2,215.6 68.2,215.6" fill="#167479" clip-path="url(#c86)"/>
<circle cx="86.2" cy="197.6" r="18.7" fill="none" stroke="#177c83" stroke-width="1.35"/>
<text x="86.20" y="179.00" font-size="7.2" fill="#ececec" text-anchor="middle" font-weight="normal" >Solar</text>
<text x="86.20" y="205.00" font-size="7.0" fill="#e2e2e2" text-anchor="middle" font-weight="normal" >18.22v</text>
<clipPath id="c134"><circle cx="134.7" cy="197.6" r="16.9"/></clipPath>
<polygon points="116.70,190.82 117.30,191.01 117.90,191.15 118.50,191.25 119.10,191.30 119.70,191.29 120.30,191.22 120.90,191.11 121.50,190.95 122.10,190.75 122.70,190.53 123.30,190.30 123.90,190.07 124.50,189.85 125.10,189.65 125.70,189.49 126.30,189.38 126.90,189.31 127.50,189.30 128.10,189.35 128.70,189.45 129.30,189.59 129.90,189.78 130.50,189.99 131.10,190.22 131.70,190.46 132.30,190.68 132.90,190.89 133.50,191.06 134.10,191.19 134.70,191.27 135.30,191.30 135.90,191.27 136.50,191.19 137.10,191.06 137.70,190.89 138.30,190.68 138.90,190.46 139.50,190.22 140.10,189.99 140.70,189.78 141.30,189.59 141.90,189.45 142.50,189.35 143.10,189.30 143.70,189.31 144.30,189.38 144.90,189.49 145.50,189.65 146.10,189.85 146.70,190.07 147.30,190.30 147.90,190.53 148.50,190.75 149.10,190.95 149.70,191.11 150.30,191.22 150.90,191.29 151.50,191.30 152.10,191.25 152.70,191.15 152.7,215.6 116.69999999999999,215.6" fill="#167479" clip-path="url(#c134)"/>
<circle cx="134.7" cy="197.6" r="18.7" fill="none" stroke="#177c83" stroke-width="1.35"/>
<text x="134.70" y="179.00" font-size="7.2" fill="#ececec" text-anchor="middle" font-weight="normal" >Battery</text>
<text x="134.70" y="205.00" font-size="7.0" fill="#e2e2e2" text-anchor="middle" font-weight="normal" >13.7v</text>
<clipPath id="c183"><circle cx="183.5" cy="197.6" r="16.9"/></clipPath>
<polygon points="165.50,190.26 166.10,190.50 166.70,190.72 167.30,190.92 167.90,191.09 168.50,191.21 169.10,191.28 169.70,191.30 170.30,191.26 170.90,191.17 171.50,191.03 172.10,190.86 172.70,190.65 173.30,190.42 173.90,190.18 174.50,189.95 175.10,189.74 175.70,189.57 176.30,189.43 176.90,189.34 177.50,189.30 178.10,189.32 178.70,189.39 179.30,189.51 179.90,189.68 180.50,189.88 181.10,190.11 181.70,190.34 182.30,190.57 182.90,190.79 183.50,190.98 184.10,191.13 184.70,191.24 185.30,191.29 185.90,191.29 186.50,191.24 187.10,191.13 187.70,190.98 188.30,190.79 188.90,190.57 189.50,190.34 190.10,190.10 190.70,189.88 191.30,189.68 191.90,189.51 192.50,189.39 193.10,189.32 193.70,189.30 194.30,189.34 194.90,189.43 195.50,189.57 196.10,189.74 196.70,189.95 197.30,190.18 197.90,190.42 198.50,190.65 199.10,190.86 199.70,191.03 200.30,191.17 200.90,191.26 201.50,191.30 201.5,215.6 165.5,215.6" fill="#167479" clip-path="url(#c183)"/>
<circle cx="183.5" cy="197.6" r="18.7" fill="none" stroke="#177c83" stroke-width="1.35"/>
<text x="183.50" y="179.00" font-size="7.2" fill="#ececec" text-anchor="middle" font-weight="normal" >Load</text>
<text x="183.50" y="205.00" font-size="7.0" fill="#e2e2e2" text-anchor="middle" font-weight="normal" >13.7v</text>
<text x="86.25" y="227.70" font-size="7.2" fill="#ececec" text-anchor="middle" font-weight="normal" >Solar</text>
<path d="M69.75,253.40 A16.5,16.5 0 0 1 102.75,253.40 L96.35,253.40 A10.1,10.1 0 0 0 76.15,253.40 Z" fill="#5a5a5a"/>
<path d="M69.75,253.40 A16.5,16.5 0 0 1 83.01,237.22 L84.26,243.50 A10.1,10.1 0 0 0 76.15,253.40 Z" fill="#cbdb76"/>
<line x1="84.97" y1="247.03" x2="83.01" y2="237.22" stroke="#cfcfcf" stroke-width="0.8"/>
<text x="86.25" y="253.40" font-size="6.0" fill="#f0f0f0" text-anchor="middle" font-weight="bold" >4.37</text>
<text x="72.85" y="258.00" font-size="4.4" fill="#bcbcbc" text-anchor="middle" font-weight="normal" >0</text>
<text x="86.25" y="259.40" font-size="4.4" fill="#bcbcbc" text-anchor="middle" font-weight="normal" >A</text>
<text x="99.85" y="258.00" font-size="4.4" fill="#bcbcbc" text-anchor="middle" font-weight="normal" >10</text>
<text x="134.70" y="227.70" font-size="7.2" fill="#ececec" text-anchor="middle" font-weight="normal" >Battery</text>
<path d="M118.20,253.40 A16.5,16.5 0 0 1 151.20,253.40 L144.80,253.40 A10.1,10.1 0 0 0 124.60,253.40 Z" fill="#5a5a5a"/>
<path d="M118.20,253.40 A16.5,16.5 0 0 1 138.90,237.44 L137.27,243.63 A10.1,10.1 0 0 0 124.60,253.40 Z" fill="#cbdb76"/>
<line x1="136.36" y1="247.11" x2="138.90" y2="237.44" stroke="#cfcfcf" stroke-width="0.8"/>
<text x="134.70" y="253.40" font-size="6.0" fill="#f0f0f0" text-anchor="middle" font-weight="bold" >5.82</text>
<text x="121.30" y="258.00" font-size="4.4" fill="#bcbcbc" text-anchor="middle" font-weight="normal" >0</text>
<text x="134.70" y="259.40" font-size="4.4" fill="#bcbcbc" text-anchor="middle" font-weight="normal" >A</text>
<text x="148.30" y="258.00" font-size="4.4" fill="#bcbcbc" text-anchor="middle" font-weight="normal" >10</text>
<text x="183.40" y="227.70" font-size="7.2" fill="#ececec" text-anchor="middle" font-weight="normal" >Load</text>
<path d="M166.90,253.40 A16.5,16.5 0 0 1 199.90,253.40 L193.50,253.40 A10.1,10.1 0 0 0 173.30,253.40 Z" fill="#5a5a5a"/>
<path d="M166.90,253.40 A16.5,16.5 0 0 1 167.64,248.50 L173.76,250.40 A10.1,10.1 0 0 0 173.30,253.40 Z" fill="#958d84"/>
<line x1="177.19" y1="251.47" x2="167.64" y2="248.50" stroke="#cfcfcf" stroke-width="0.8"/>
<text x="183.40" y="253.40" font-size="6.0" fill="#f0f0f0" text-anchor="middle" font-weight="bold" >0.96</text>
<text x="170.00" y="258.00" font-size="4.4" fill="#bcbcbc" text-anchor="middle" font-weight="normal" >0</text>
<text x="183.40" y="259.40" font-size="4.4" fill="#bcbcbc" text-anchor="middle" font-weight="normal" >A</text>
<text x="197.00" y="258.00" font-size="4.4" fill="#bcbcbc" text-anchor="middle" font-weight="normal" >10</text>
<path d="M779.5,62.2 L782.3,58.9 L785.1,62.2 Z" fill="#33a9b9"/>
<rect x="646.7" y="74.9" width="143.5" height="21.3" fill="#177479"/>
<text transform="translate(718.40,88.10) scale(0.95,1)" x="0" y="0" font-size="6.5" fill="#ececec" text-anchor="middle" font-weight="normal" stroke="#ececec" stroke-width="0.2">READ VALUES</text>
<text x="651.00" y="113.10" font-size="7.4" fill="#e0e0e0" text-anchor="start" font-weight="normal" >Battery Type</text>
<text x="703.00" y="113.00" font-size="7.2" fill="#e8e8e8" text-anchor="start" font-weight="normal" >Sealed</text>
<rect x="702" y="115.3" width="84" height="1.1" fill="#7a7a7a"/>
<path d="M783.3,109.8 L787.1,109.8 L785.2,112 Z" fill="#dddddd"/>
<text x="652.10" y="136.90" font-size="7.3" fill="#e0e0e0" text-anchor="start" font-weight="normal" >Battery Capacity</text>
<text x="771.30" y="137.20" font-size="7.35" fill="#eeeeee" text-anchor="end" font-weight="bold" >50 Ah</text>
<polyline points="738.86,133.80 741.56,136.50 744.26,133.80" fill="none" stroke="#e6e6e6" stroke-width="1.2"/>
<polyline points="778.20,136.60 780.90,133.90 783.60,136.60" fill="none" stroke="#e6e6e6" stroke-width="1.2"/>
<text x="652.10" y="161.25" font-size="7.3" fill="#e0e0e0" text-anchor="start" font-weight="normal" >High Voltage Disconnect</text>
<text x="771.30" y="161.55" font-size="7.35" fill="#eeeeee" text-anchor="end" font-weight="bold" >16 V</text>
<polyline points="743.48,158.15 746.18,160.85 748.88,158.15" fill="none" stroke="#e6e6e6" stroke-width="1.2"/>
<polyline points="778.20,160.95 780.90,158.25 783.60,160.95" fill="none" stroke="#e6e6e6" stroke-width="1.2"/>
<text x="652.10" y="185.60" font-size="7.3" fill="#e0e0e0" text-anchor="start" font-weight="normal" >Charging Limit</text>
<text x="771.30" y="185.90" font-size="7.35" fill="#eeeeee" text-anchor="end" font-weight="bold" >15 V</text>
<polyline points="743.48,182.50 746.18,185.20 748.88,182.50" fill="none" stroke="#e6e6e6" stroke-width="1.2"/>
<polyline points="778.20,185.30 780.90,182.60 783.60,185.30" fill="none" stroke="#e6e6e6" stroke-width="1.2"/>
<text x="652.10" y="209.95" font-size="7.3" fill="#e0e0e0" text-anchor="start" font-weight="normal" >Over Voltage Reconnect</text>
<text x="771.30" y="210.25" font-size="7.35" fill="#eeeeee" text-anchor="end" font-weight="bold" >15 V</text>
<polyline points="743.48,206.85 746.18,209.55 748.88,206.85" fill="none" stroke="#e6e6e6" stroke-width="1.2"/>
<polyline points="778.20,209.65 780.90,206.95 783.60,209.65" fill="none" stroke="#e6e6e6" stroke-width="1.2"/>
<text x="652.10" y="234.30" font-size="7.3" fill="#e0e0e0" text-anchor="start" font-weight="normal" >Equalization</text>
<text x="771.30" y="234.60" font-size="7.35" fill="#eeeeee" text-anchor="end" font-weight="bold" >14.6 V</text>
<polyline points="737.35,231.20 740.05,233.90 742.75,231.20" fill="none" stroke="#e6e6e6" stroke-width="1.2"/>
<polyline points="778.20,234.00 780.90,231.30 783.60,234.00" fill="none" stroke="#e6e6e6" stroke-width="1.2"/>
<text x="652.10" y="258.65" font-size="7.3" fill="#e0e0e0" text-anchor="start" font-weight="normal" >Boost</text>
<text x="771.30" y="258.95" font-size="7.35" fill="#eeeeee" text-anchor="end" font-weight="bold" >14.4 V</text>
<polyline points="737.35,255.55 740.05,258.25 742.75,255.55" fill="none" stroke="#e6e6e6" stroke-width="1.2"/>
<polyline points="778.20,258.35 780.90,255.65 783.60,258.35" fill="none" stroke="#e6e6e6" stroke-width="1.2"/>
<text x="652.10" y="283.00" font-size="7.3" fill="#e0e0e0" text-anchor="start" font-weight="normal" >Float</text>
<text x="771.30" y="283.30" font-size="7.35" fill="#eeeeee" text-anchor="end" font-weight="bold" >13.8 V</text>
<polyline points="737.35,279.90 740.05,282.60 742.75,279.90" fill="none" stroke="#e6e6e6" stroke-width="1.2"/>
<polyline points="778.20,282.70 780.90,280.00 783.60,282.70" fill="none" stroke="#e6e6e6" stroke-width="1.2"/>
<text x="652.10" y="307.35" font-size="7.3" fill="#e0e0e0" text-anchor="start" font-weight="normal" >Boost Reconnect</text>
<text x="771.30" y="307.65" font-size="7.35" fill="#eeeeee" text-anchor="end" font-weight="bold" >13.2 V</text>
<polyline points="737.35,304.25 740.05,306.95 742.75,304.25" fill="none" stroke="#e6e6e6" stroke-width="1.2"/>
<polyline points="778.20,307.05 780.90,304.35 783.60,307.05" fill="none" stroke="#e6e6e6" stroke-width="1.2"/>
<text x="652.10" y="331.70" font-size="7.3" fill="#e0e0e0" text-anchor="start" font-weight="normal" >Low Voltage Reconnect</text>
<text x="771.30" y="332.00" font-size="7.35" fill="#eeeeee" text-anchor="end" font-weight="bold" >12.6 V</text>
<polyline points="737.35,328.60 740.05,331.30 742.75,328.60" fill="none" stroke="#e6e6e6" stroke-width="1.2"/>
<polyline points="778.20,331.40 780.90,328.70 783.60,331.40" fill="none" stroke="#e6e6e6" stroke-width="1.2"/>
<text x="652.10" y="356.05" font-size="7.3" fill="#e0e0e0" text-anchor="start" font-weight="normal" >Under Voltage Recover</text>
<text x="771.30" y="356.35" font-size="7.35" fill="#eeeeee" text-anchor="end" font-weight="bold" >12.2 V</text>
<polyline points="737.35,352.95 740.05,355.65 742.75,352.95" fill="none" stroke="#e6e6e6" stroke-width="1.2"/>
<polyline points="778.20,355.75 780.90,353.05 783.60,355.75" fill="none" stroke="#e6e6e6" stroke-width="1.2"/>
<text x="652.10" y="380.40" font-size="7.3" fill="#e0e0e0" text-anchor="start" font-weight="normal" >Under Voltage Warning</text>
<text x="771.30" y="380.70" font-size="7.35" fill="#eeeeee" text-anchor="end" font-weight="bold" >12 V</text>
<polyline points="743.48,377.30 746.18,380.00 748.88,377.30" fill="none" stroke="#e6e6e6" stroke-width="1.2"/>
<polyline points="778.20,380.10 780.90,377.40 783.60,380.10" fill="none" stroke="#e6e6e6" stroke-width="1.2"/>
<text x="652.10" y="404.75" font-size="7.3" fill="#e0e0e0" text-anchor="start" font-weight="normal" >Low Voltage Disconnect</text>
<text x="771.30" y="405.05" font-size="7.35" fill="#eeeeee" text-anchor="end" font-weight="bold" >11.1 V</text>
<polyline points="737.76,401.65 740.46,404.35 743.16,401.65" fill="none" stroke="#e6e6e6" stroke-width="1.2"/>
<polyline points="778.20,404.45 780.90,401.75 783.60,404.45" fill="none" stroke="#e6e6e6" stroke-width="1.2"/>
<text x="652.10" y="429.10" font-size="7.3" fill="#e0e0e0" text-anchor="start" font-weight="normal" >Discharge Limit</text>
<text x="771.30" y="429.40" font-size="7.35" fill="#eeeeee" text-anchor="end" font-weight="bold" >10.6 V</text>
<polyline points="737.35,426.00 740.05,428.70 742.75,426.00" fill="none" stroke="#e6e6e6" stroke-width="1.2"/>
<polyline points="778.20,428.80 780.90,426.10 783.60,428.80" fill="none" stroke="#e6e6e6" stroke-width="1.2"/>
<text x="652.10" y="453.45" font-size="7.3" fill="#e0e0e0" text-anchor="start" font-weight="normal" >Equalization Duration</text>
<text x="771.30" y="453.75" font-size="7.35" fill="#eeeeee" text-anchor="end" font-weight="bold" >60 m</text>
<polyline points="741.85,450.35 744.55,453.05 747.25,450.35" fill="none" stroke="#e6e6e6" stroke-width="1.2"/>
<polyline points="778.20,453.15 780.90,450.45 783.60,453.15" fill="none" stroke="#e6e6e6" stroke-width="1.2"/>
<text x="652.10" y="477.80" font-size="7.3" fill="#e0e0e0" text-anchor="start" font-weight="normal" >Boost Duration</text>
<text x="771.30" y="478.10" font-size="7.35" fill="#eeeeee" text-anchor="end" font-weight="bold" >120 m</text>
<polyline points="737.76,474.70 740.46,477.40 743.16,474.70" fill="none" stroke="#e6e6e6" stroke-width="1.2"/>
<polyline points="778.20,477.50 780.90,474.80 783.60,477.50" fill="none" stroke="#e6e6e6" stroke-width="1.2"/>
<rect x="646.7" y="488.6" width="143.5" height="21.6" fill="#177479"/>
<text transform="translate(718.60,501.90) scale(0.95,1)" x="0" y="0" font-size="6.5" fill="#ececec" text-anchor="middle" font-weight="normal" stroke="#ececec" stroke-width="0.2">WRITE VALUES</text>
</svg></div></body></html>
